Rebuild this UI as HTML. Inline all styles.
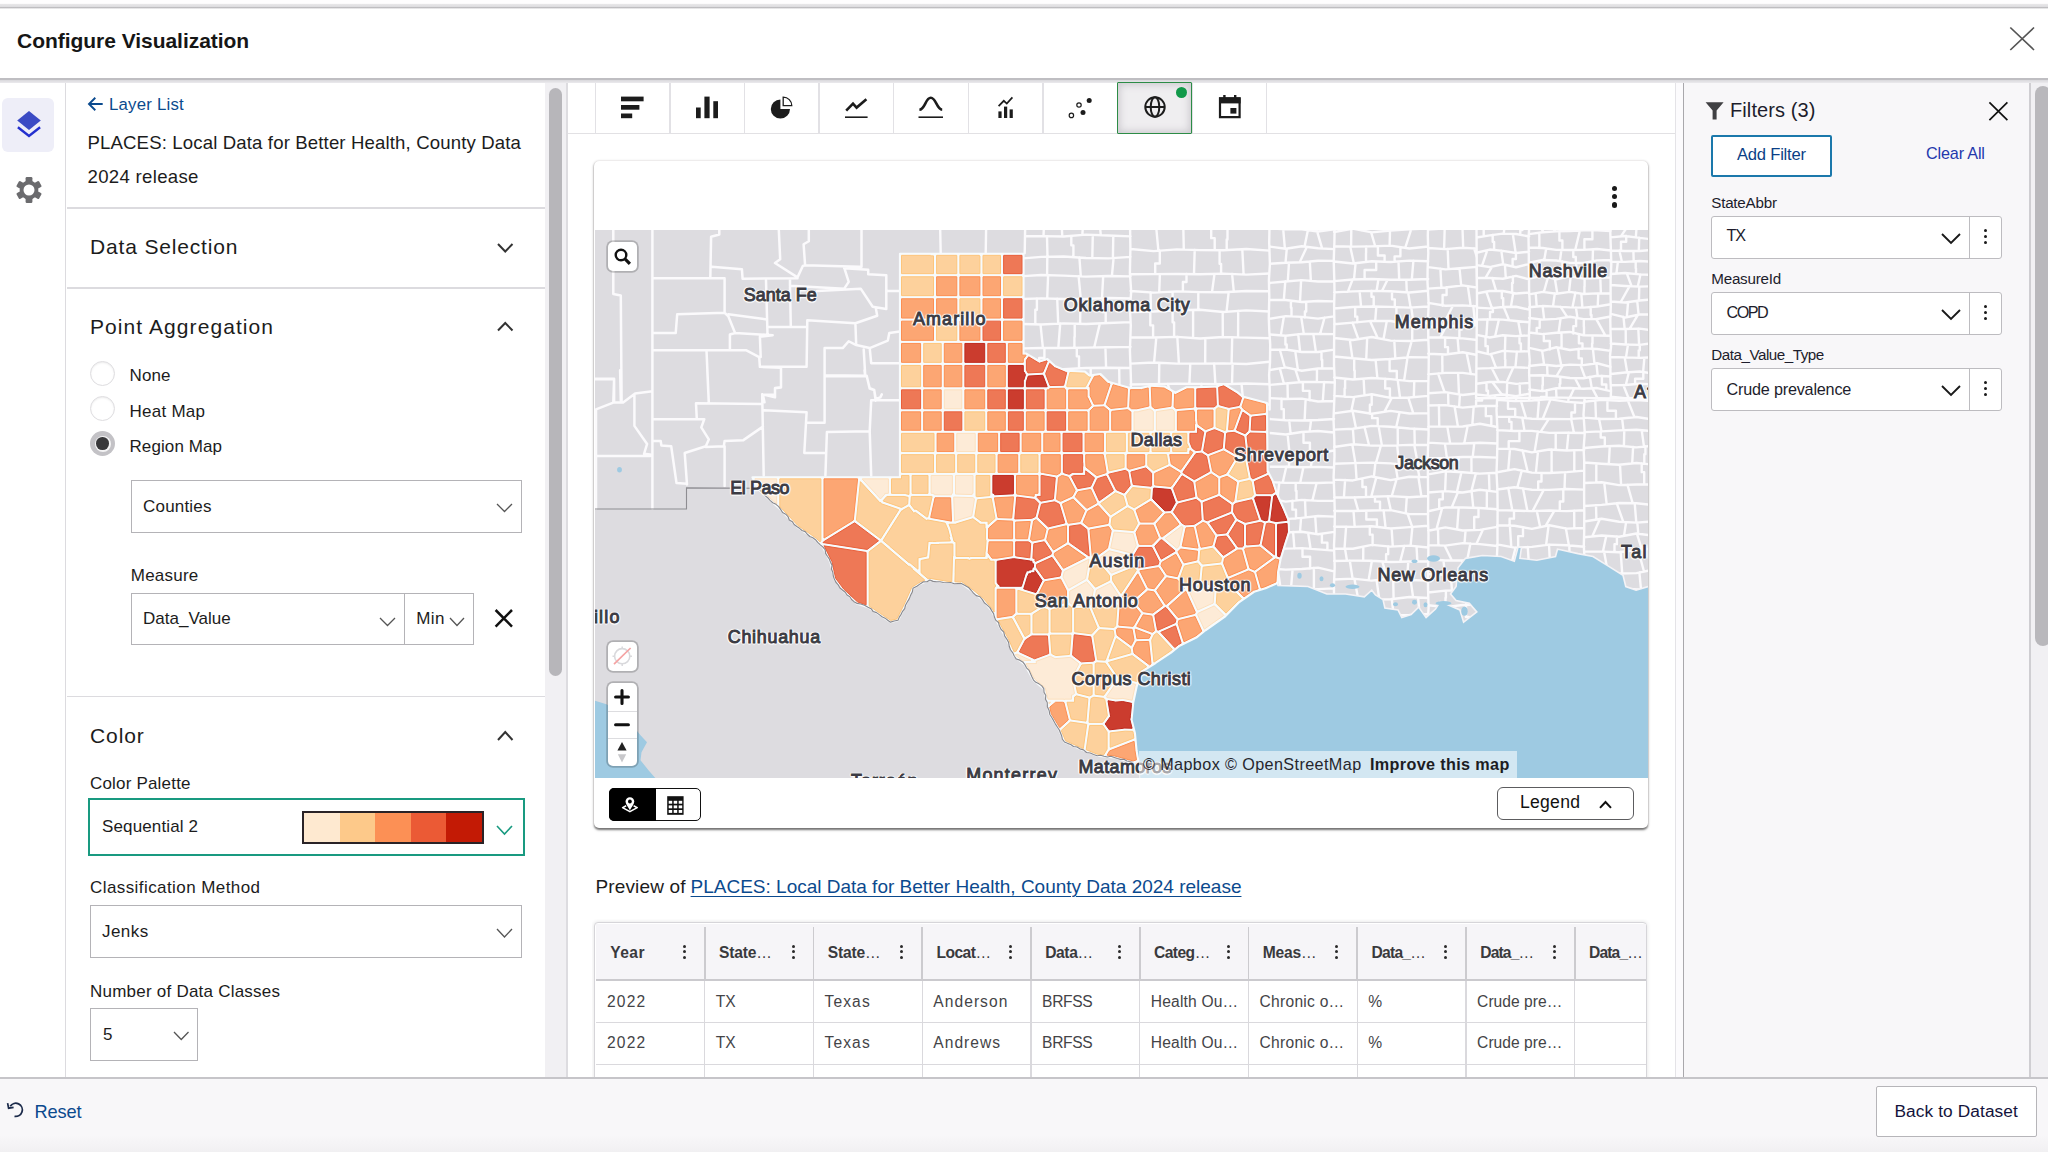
<!DOCTYPE html>
<html lang="en"><head><meta charset="utf-8"><title>Configure Visualization</title>
<style>
html,body{margin:0;padding:0;}
body{width:2048px;height:1152px;overflow:hidden;background:#fff;font-family:"Liberation Sans",sans-serif;color:#212121;}
#app{position:relative;width:2048px;height:1152px;overflow:hidden;}
.t{position:absolute;white-space:nowrap;line-height:1;}
</style></head>
<body><div id="app">
<div style="position:absolute;left:0.00px;top:0.00px;width:2048.00px;height:9.00px;background:linear-gradient(#fefdfe 0,#fefdfe 38%,#e8e7e9 44%,#dfdee1 72%,#bebdc0 80%,#bfbec1 88%,#f0eff1 96%,#fdfcfd 100%);"></div>
<div style="position:absolute;left:0.00px;top:9.00px;width:2048.00px;height:68.50px;background:#fff;"></div>
<div style="position:absolute;left:0.00px;top:77.50px;width:2048.00px;height:2.00px;background:#bfbec2;"></div>
<div style="position:absolute;left:0.00px;top:79.50px;width:2048.00px;height:3.50px;background:linear-gradient(#d9d8dc,#ebeaed);"></div>
<div class="t" style="left:17.00px;top:30.00px;font-size:21px;font-weight:700;letter-spacing:-0.035px;color:#161616;">Configure Visualization</div>
<svg style="position:absolute;left:2008.00px;top:25.00px;" width="28" height="28" viewBox="0 0 28 28"><path d="M2.3 2.5L26 25M26 2.5L2.3 25" stroke="#555" stroke-width="1.7" fill="none"/></svg>
<div style="position:absolute;left:0.00px;top:83.00px;width:65.00px;height:995.00px;background:#fff;"></div>
<div style="position:absolute;left:65.00px;top:83.00px;width:1.40px;height:995.00px;background:#dcdbdf;"></div>
<div style="position:absolute;left:1.50px;top:98.00px;width:52.50px;height:53.50px;background:#eeeef8;border-radius:6px;"></div>
<svg style="position:absolute;left:14.60px;top:108.00px;" width="28" height="32" viewBox="0 0 28 32"><path d="M14 3.1L25.8 12.6L14 22.1L2.2 12.6Z" fill="#3b4bc4"/><path d="M2.9 19.3L14 28L25.1 19.3" fill="none" stroke="#2430cf" stroke-width="2.4"/></svg>
<svg style="position:absolute;left:15.50px;top:177.00px;" width="26" height="26" viewBox="0 0 26 26"><g transform="translate(13 13)" fill="#6b6b6e"><rect x="-3.4" y="-13" width="6.8" height="8" rx="1.2" transform="rotate(0)"/><rect x="-3.4" y="-13" width="6.8" height="8" rx="1.2" transform="rotate(60)"/><rect x="-3.4" y="-13" width="6.8" height="8" rx="1.2" transform="rotate(120)"/><rect x="-3.4" y="-13" width="6.8" height="8" rx="1.2" transform="rotate(180)"/><rect x="-3.4" y="-13" width="6.8" height="8" rx="1.2" transform="rotate(240)"/><rect x="-3.4" y="-13" width="6.8" height="8" rx="1.2" transform="rotate(300)"/><circle r="9.4"/><circle r="5.5" fill="#fff"/></g></svg>
<div style="position:absolute;left:66.50px;top:83.00px;width:478.50px;height:995.00px;background:#fff;"></div>
<div style="position:absolute;left:545.00px;top:83.00px;width:22.50px;height:995.00px;background:#f1f0f3;"></div>
<div style="position:absolute;left:549.00px;top:87.50px;width:13.00px;height:588.50px;background:#b7b6ba;border-radius:7px;"></div>
<div style="position:absolute;left:566.00px;top:83.00px;width:1.50px;height:995.00px;background:#dddce0;"></div>
<svg style="position:absolute;left:87.00px;top:96.00px;" width="18" height="16" viewBox="0 0 18 16"><path d="M15.7 8H2.2M8.3 1.8L2 8L8.3 14.2" fill="none" stroke="#0b4a8e" stroke-width="1.9"/></svg>
<div class="t" style="left:109.00px;top:97.10px;font-size:16.8px;letter-spacing:0.213px;color:#0b4a8e;">Layer List</div>
<div class="t" style="left:87.50px;top:134.20px;font-size:18.6px;letter-spacing:0.136px;color:#1c1c1c;">PLACES: Local Data for Better Health, County Data</div>
<div class="t" style="left:87.50px;top:168.20px;font-size:18.6px;letter-spacing:0.313px;color:#1c1c1c;">2024 release</div>
<div style="position:absolute;left:66.50px;top:207.00px;width:478.50px;height:1.50px;background:#dcdbdf;"></div>
<div style="position:absolute;left:66.50px;top:287.00px;width:478.50px;height:1.50px;background:#dcdbdf;"></div>
<div style="position:absolute;left:66.50px;top:695.50px;width:478.50px;height:1.50px;background:#dcdbdf;"></div>
<div class="t" style="left:90.00px;top:236.00px;font-size:21px;letter-spacing:0.840px;color:#1c1c1c;">Data Selection</div>
<svg style="position:absolute;left:496.00px;top:241.80px;" width="18.5" height="11.5" viewBox="0 0 18.5 11.5"><polyline points="2,2 9.25,9.5 16.5,2" fill="none" stroke="#333" stroke-width="2.0"/></svg>
<div class="t" style="left:90.00px;top:316.00px;font-size:21px;letter-spacing:1.075px;color:#1c1c1c;">Point Aggregation</div>
<svg style="position:absolute;left:496.00px;top:321.00px;" width="18.5" height="11.5" viewBox="0 0 18.5 11.5"><polyline points="2,9.5 9.25,2 16.5,9.5" fill="none" stroke="#333" stroke-width="2.0"/></svg>
<div style="position:absolute;left:90.00px;top:360.50px;width:25.00px;height:25.00px;border-radius:50%;background:#fff;border:1.5px solid #dedde0;box-sizing:border-box;box-shadow:inset 0 1px 2px rgba(0,0,0,.08);"></div>
<div style="position:absolute;left:90.00px;top:395.50px;width:25.00px;height:25.00px;border-radius:50%;background:#fff;border:1.5px solid #dedde0;box-sizing:border-box;box-shadow:inset 0 1px 2px rgba(0,0,0,.08);"></div>
<div style="position:absolute;left:90.00px;top:431.00px;width:25.00px;height:25.00px;border-radius:50%;background:#c3c2c6;"></div>
<div style="position:absolute;left:94.50px;top:435.50px;width:16.00px;height:16.00px;border-radius:50%;background:#f4f4f5;"></div>
<div style="position:absolute;left:96.20px;top:437.20px;width:12.60px;height:12.60px;border-radius:50%;background:#38383a;"></div>
<div class="t" style="left:129.50px;top:367.00px;font-size:17px;letter-spacing:0.119px;color:#1c1c1c;">None</div>
<div class="t" style="left:129.50px;top:403.00px;font-size:17px;letter-spacing:0.257px;color:#1c1c1c;">Heat Map</div>
<div class="t" style="left:129.50px;top:438.00px;font-size:17px;letter-spacing:0.092px;color:#1c1c1c;">Region Map</div>
<div style="position:absolute;left:130.50px;top:480.00px;width:391.00px;height:52.50px;background:#fff;border:1px solid #b4b3b7;box-sizing:border-box;"></div>
<div class="t" style="left:143.00px;top:498.00px;font-size:17px;letter-spacing:0.200px;color:#1c1c1c;">Counties</div>
<svg style="position:absolute;left:495.00px;top:502.40px;" width="19" height="11.5" viewBox="0 0 19 11.5"><polyline points="2,2 9.5,9.5 17,2" fill="none" stroke="#555" stroke-width="1.3"/></svg>
<div class="t" style="left:130.75px;top:567.00px;font-size:17px;letter-spacing:0.226px;color:#1c1c1c;">Measure</div>
<div style="position:absolute;left:130.50px;top:592.50px;width:274.00px;height:52.50px;background:#fff;border:1px solid #b4b3b7;box-sizing:border-box;"></div>
<div style="position:absolute;left:403.50px;top:592.50px;width:70.50px;height:52.50px;background:#fff;border:1px solid #b4b3b7;box-sizing:border-box;"></div>
<div class="t" style="left:143.00px;top:610.00px;font-size:17px;letter-spacing:0.018px;color:#1c1c1c;">Data_Value</div>
<svg style="position:absolute;left:378.00px;top:615.80px;" width="19" height="11.5" viewBox="0 0 19 11.5"><polyline points="2,2 9.5,9.5 17,2" fill="none" stroke="#555" stroke-width="1.3"/></svg>
<div class="t" style="left:416.25px;top:610.00px;font-size:17px;letter-spacing:0.428px;color:#1c1c1c;">Min</div>
<svg style="position:absolute;left:448.00px;top:615.80px;" width="18" height="11.5" viewBox="0 0 18 11.5"><polyline points="2,2 9.0,9.5 16,2" fill="none" stroke="#555" stroke-width="1.3"/></svg>
<svg style="position:absolute;left:492.00px;top:606.00px;" width="24" height="24" viewBox="0 0 24 24"><path d="M3.6 4L20 20.6M20 4L3.6 20.6" stroke="#111" stroke-width="2.5" fill="none"/></svg>
<div class="t" style="left:90.00px;top:725.00px;font-size:21px;letter-spacing:0.891px;color:#1c1c1c;">Color</div>
<svg style="position:absolute;left:496.00px;top:730.00px;" width="18.5" height="12" viewBox="0 0 18.5 12"><polyline points="2,10 9.25,2 16.5,10" fill="none" stroke="#333" stroke-width="2.0"/></svg>
<div class="t" style="left:90.00px;top:775.00px;font-size:17px;letter-spacing:0.185px;color:#1c1c1c;">Color Palette</div>
<div style="position:absolute;left:87.50px;top:797.50px;width:437.00px;height:58.50px;background:#fff;border:2.5px solid #199a80;box-sizing:border-box;"></div>
<div class="t" style="left:102.00px;top:818.00px;font-size:17px;letter-spacing:0.134px;color:#1c1c1c;">Sequential 2</div>
<div style="position:absolute;left:302.00px;top:811.00px;width:181.50px;height:32.50px;border:2px solid #2a2327;box-sizing:border-box;display:flex;"><div style="flex:1;background:#fee9d0"></div><div style="flex:1;background:#fdc98a"></div><div style="flex:1;background:#fc9055"></div><div style="flex:1;background:#eb5a35"></div><div style="flex:1;background:#c31a05"></div></div>
<svg style="position:absolute;left:495.00px;top:823.50px;" width="19" height="12.0" viewBox="0 0 19 12.0"><polyline points="2,2 9.5,10.0 17,2" fill="none" stroke="#199a80" stroke-width="1.6"/></svg>
<div class="t" style="left:90.00px;top:879.00px;font-size:17px;letter-spacing:0.421px;color:#1c1c1c;">Classification Method</div>
<div style="position:absolute;left:90.00px;top:905.00px;width:431.50px;height:52.50px;background:#fff;border:1px solid #b4b3b7;box-sizing:border-box;"></div>
<div class="t" style="left:102.00px;top:923.00px;font-size:17px;letter-spacing:0.460px;color:#1c1c1c;">Jenks</div>
<svg style="position:absolute;left:495.00px;top:927.40px;" width="19" height="12.0" viewBox="0 0 19 12.0"><polyline points="2,2 9.5,10.0 17,2" fill="none" stroke="#555" stroke-width="1.3"/></svg>
<div class="t" style="left:90.00px;top:983.00px;font-size:17px;letter-spacing:0.229px;color:#1c1c1c;">Number of Data Classes</div>
<div style="position:absolute;left:90.00px;top:1008.00px;width:108.00px;height:52.50px;background:#fff;border:1px solid #b4b3b7;box-sizing:border-box;"></div>
<div class="t" style="left:103.00px;top:1026.00px;font-size:17px;color:#1c1c1c;">5</div>
<svg style="position:absolute;left:172.00px;top:1030.40px;" width="18.5" height="11.5" viewBox="0 0 18.5 11.5"><polyline points="2,2 9.25,9.5 16.5,2" fill="none" stroke="#555" stroke-width="1.3"/></svg>
<div style="position:absolute;left:567.50px;top:83.00px;width:1108.00px;height:995.00px;background:#fff;"></div>
<div style="position:absolute;left:567.50px;top:83.00px;width:1108.00px;height:50.50px;background:#fff;"></div>
<div style="position:absolute;left:567.50px;top:133.00px;width:1108.00px;height:1.30px;background:#e2e1e4;"></div>
<div style="position:absolute;left:594.65px;top:83.00px;width:1.30px;height:50.50px;background:#e2e1e5;"></div>
<div style="position:absolute;left:669.25px;top:83.00px;width:1.30px;height:50.50px;background:#e2e1e5;"></div>
<div style="position:absolute;left:743.85px;top:83.00px;width:1.30px;height:50.50px;background:#e2e1e5;"></div>
<div style="position:absolute;left:818.45px;top:83.00px;width:1.30px;height:50.50px;background:#e2e1e5;"></div>
<div style="position:absolute;left:893.05px;top:83.00px;width:1.30px;height:50.50px;background:#e2e1e5;"></div>
<div style="position:absolute;left:967.65px;top:83.00px;width:1.30px;height:50.50px;background:#e2e1e5;"></div>
<div style="position:absolute;left:1042.25px;top:83.00px;width:1.30px;height:50.50px;background:#e2e1e5;"></div>
<div style="position:absolute;left:1116.85px;top:83.00px;width:1.30px;height:50.50px;background:#e2e1e5;"></div>
<div style="position:absolute;left:1191.45px;top:83.00px;width:1.30px;height:50.50px;background:#e2e1e5;"></div>
<div style="position:absolute;left:1266.05px;top:83.00px;width:1.30px;height:50.50px;background:#e2e1e5;"></div>
<div style="position:absolute;left:1117.15px;top:82.00px;width:75.00px;height:52.00px;background:#efeef0;border:1.6px solid #2c8c46;box-sizing:border-box;box-shadow:inset 0 0 7px 2px rgba(120,110,125,.28);border-radius:1px;"></div>
<div style="position:absolute;left:1176.00px;top:87.00px;width:11.20px;height:11.20px;background:#12994a;border-radius:50%;"></div>
<svg style="position:absolute;left:620.00px;top:95.00px;" width="26" height="26" viewBox="0 0 26 26"><g fill="#1c1c1c"><rect x="1" y="1.6" width="22.6" height="4.7"/><rect x="1" y="10" width="18.4" height="4.7"/><rect x="1" y="18.5" width="11.2" height="4.7"/></g></svg>
<svg style="position:absolute;left:695.00px;top:95.00px;" width="26" height="26" viewBox="0 0 26 26"><g fill="#1c1c1c"><rect x="1" y="12.5" width="4.7" height="10.7"/><rect x="9.4" y="1.6" width="5.2" height="21.6"/><rect x="18.3" y="6.2" width="4.7" height="17"/></g></svg>
<svg style="position:absolute;left:768.00px;top:94.00px;" width="28" height="28" viewBox="0 0 28 28"><path d="M12.4 5.4A9.6 9.6 0 1 0 22 15H12.4Z" fill="#1c1c1c"/><path d="M15.2 3.1A8.6 8.6 0 0 1 23.8 11.7H15.2Z" fill="#fff" stroke="#1c1c1c" stroke-width="1.3"/></svg>
<svg style="position:absolute;left:843.00px;top:94.00px;" width="28" height="28" viewBox="0 0 28 28"><path d="M3.2 16.6L10 9.6L13.6 13.6L23.4 5.2" fill="none" stroke="#1c1c1c" stroke-width="2.6"/><path d="M2 23.2H24.6" stroke="#1c1c1c" stroke-width="1.6"/></svg>
<svg style="position:absolute;left:916.00px;top:94.00px;" width="30" height="28" viewBox="0 0 30 28"><path d="M3.4 15.8C9.2 15.4 9.4 3.8 14.8 3.8C20.2 3.8 20.6 15.4 26.2 15.8" fill="none" stroke="#1c1c1c" stroke-width="2.6"/><path d="M2.5 23.2H27" stroke="#1c1c1c" stroke-width="1.6"/></svg>
<svg style="position:absolute;left:996.00px;top:94.00px;" width="20" height="28" viewBox="0 0 20 28"><g fill="#1c1c1c"><rect x="2.4" y="17.4" width="3.2" height="6.6"/><rect x="8" y="12.6" width="3.2" height="11.4"/><rect x="13.6" y="15.4" width="3.2" height="8.6"/></g><path d="M2.6 12.2L7.8 6.8L10.8 9.6L16.4 3.4" fill="none" stroke="#1c1c1c" stroke-width="1.7"/></svg>
<svg style="position:absolute;left:1066.00px;top:94.00px;" width="28" height="28" viewBox="0 0 28 28"><circle cx="23.2" cy="6.6" r="2.5" fill="#1c1c1c"/><circle cx="17" cy="18.4" r="2.5" fill="#1c1c1c"/><circle cx="13" cy="11" r="2.2" fill="#fff" stroke="#1c1c1c" stroke-width="1.2"/><circle cx="5.4" cy="21.4" r="2.2" fill="#fff" stroke="#1c1c1c" stroke-width="1.2"/></svg>
<svg style="position:absolute;left:1142.00px;top:94.00px;" width="26" height="26" viewBox="0 0 26 26"><g fill="none" stroke="#1c1c1c" stroke-width="2"><circle cx="13" cy="13" r="9.7"/><ellipse cx="13" cy="13" rx="4.3" ry="9.7"/><path d="M3.3 13H22.7"/></g></svg>
<svg style="position:absolute;left:1217.00px;top:93.00px;" width="26" height="28" viewBox="0 0 26 28"><path d="M3 5.4H22.6V24.2H3Z" fill="none" stroke="#1c1c1c" stroke-width="2.2"/><rect x="2" y="4.4" width="21.6" height="6" fill="#1c1c1c"/><rect x="6.2" y="2" width="2.4" height="4" fill="#1c1c1c"/><rect x="17" y="2" width="2.4" height="4" fill="#1c1c1c"/><rect x="13.4" y="15" width="6" height="5.6" fill="#1c1c1c"/></svg>
<div style="position:absolute;left:594.00px;top:160.50px;width:1053.50px;height:667.00px;background:#fff;border-radius:5px;box-shadow:0 1.6px 2.2px rgba(0,0,0,.55),0 0 3px rgba(60,0,20,.10);"></div>
<div style="position:absolute;left:1611.95px;top:186.25px;width:5.10px;height:5.10px;border-radius:50%;background:#1a1a1a;"></div><div style="position:absolute;left:1611.95px;top:194.35px;width:5.10px;height:5.10px;border-radius:50%;background:#1a1a1a;"></div><div style="position:absolute;left:1611.95px;top:202.45px;width:5.10px;height:5.10px;border-radius:50%;background:#1a1a1a;"></div>
<svg style="position:absolute;left:594.5px;top:229.75px;" width="1053.0" height="548.25" viewBox="594.5 229.75 1053.0 548.25"><rect x="594.5" y="229.75" width="1053.0" height="548.25" fill="#dddce0"/>
<polygon points="1277.0,582.7 1277.5,585.3 1292.0,585.6 1307.5,586.3 1326.3,593.8 1345.0,593.8 1363.8,596.6 1371.3,590.0 1375.0,594.7 1382.5,599.4 1384.4,607.8 1397.5,609.7 1401.3,617.2 1410.6,614.4 1418.1,606.9 1425.6,617.2 1435.0,608.8 1439.7,601.3 1459.4,609.7 1463.1,621.9 1476.3,611.6 1468.8,603.1 1455.6,600.3 1450.0,593.8 1455.6,586.3 1457.5,567.5 1465.0,558.1 1481.9,555.3 1500.6,556.3 1513.8,560.9 1517.5,547.0 1521.0,547.0 1519.4,558.1 1536.3,560.0 1555.0,556.3 1557.0,549.0 1560.0,549.5 1577.5,553.4 1592.5,556.3 1607.5,565.6 1622.5,575.0 1625.3,586.3 1635.6,590.0 1647.5,586.3 1647.5,778.0 1140.0,778.0 1137.8,760.6 1136.0,750.3 1134.4,733.0 1131.0,719.4 1132.7,702.2 1136.0,686.7 1141.3,671.3 1155.0,662.7 1170.5,652.3 1179.0,645.5 1196.3,636.9 1204.9,630.0 1212.0,625.0 1224.0,616.6 1238.7,601.8 1253.5,591.5 1265.0,588.0" fill="#9ecae2"/>
<polygon points="594.5,700.6 606.0,704.0 619.5,712.4 631.0,724.0 640.0,735.0 646.5,742.0 641.0,752.0 640.0,760.0 648.0,770.0 655.0,778.0 594.5,778.0" fill="#9ecae2"/>
<clipPath id="cpok"><path d="M899.4 420.0L899.5 420.0L899.5 254.0L899.4 254.0ZM1023.0 353.4L1025.8 353.4L1039.0 361.3L1046.9 358.9L1054.7 366.0L1065.6 370.6L1084.4 371.4L1089.0 375.3L1100.0 373.8L1107.8 381.6L1118.8 384.7L1129.7 387.8L1140.6 387.8L1150.0 385.5L1164.0 386.3L1175.0 392.5L1186.0 387.0L1196.9 387.0L1215.6 386.3L1223.4 383.9L1237.5 392.5L1242.2 396.4L1266.4 402.7L1266.6 420.0L1269.0 420.0L1269.0 229.8L1024.5 229.8L1024.5 254.0L1023.0 254.0Z"/></clipPath><clipPath id="cpeast"><path d="M1269.0 474.4L1271.9 480.0L1276.6 494.0L1283.0 508.0L1288.0 520.0L1288.5 532.0L1284.5 544.3L1280.0 559.0L1277.5 572.0L1277.0 582.7L1277.5 585.3L1292.0 585.6L1307.5 586.3L1326.3 593.8L1345.0 593.8L1363.8 596.6L1371.3 590.0L1375.0 594.7L1382.5 599.4L1384.4 607.8L1397.5 609.7L1401.3 617.2L1410.6 614.4L1418.1 606.9L1425.6 617.2L1435.0 608.8L1439.7 601.3L1459.4 609.7L1463.1 621.9L1476.3 611.6L1468.8 603.1L1455.6 600.3L1450.0 593.8L1455.6 586.3L1457.5 567.5L1465.0 558.1L1481.9 555.3L1500.6 556.3L1513.8 560.9L1517.5 547.0L1521.0 547.0L1519.4 558.1L1536.3 560.0L1555.0 556.3L1557.0 549.0L1560.0 549.5L1577.5 553.4L1592.5 556.3L1607.5 565.6L1622.5 575.0L1625.3 586.3L1635.6 590.0L1647.5 586.3L1647.5 398.0L1476.0 398.0L1476.0 229.8L1269.0 229.8Z"/></clipPath><clipPath id="cpne"><path d="M1647.5 229.8L1476.0 229.8L1476.0 398.0L1647.5 398.0Z"/></clipPath><path clip-path="url(#cpok)" d="M899.4 210.8L923.3 211.7L947.1 211.1L971.0 211.9L994.8 212.0L1018.7 210.5M899.4 236.0L923.3 236.2L947.1 237.9L971.0 237.5L994.8 235.9L1018.7 237.6M899.4 262.2L923.3 263.4L947.1 262.2L971.0 261.8L994.8 264.1L1018.7 262.4M899.4 286.9L923.3 288.9L947.1 288.6L971.0 287.0L994.8 288.8L1018.7 287.7M899.4 314.2L923.3 313.0L947.1 314.9L971.0 314.2L994.8 315.0L1018.7 314.8M899.4 331.1L923.3 331.3L947.1 330.8L971.0 330.7L994.8 330.5L1018.7 331.1M899.4 353.9L923.3 352.3L947.1 354.0L971.0 353.2L994.8 353.1L1018.7 354.4M899.4 379.9L923.3 379.5L947.1 379.9L971.0 380.5L994.8 378.8L1018.7 381.2M899.4 402.3L923.3 404.2L947.1 404.5L971.0 402.3L994.8 404.3L1018.7 403.2M899.4 429.7L923.3 428.2L947.1 428.3L971.0 428.7L994.8 430.7L1018.7 428.7M927.1 211.6L927.1 236.5M952.3 211.3L950.0 237.8M981.4 211.9L984.5 236.6M928.0 236.5L929.9 263.1M949.4 237.8L949.1 262.1M983.4 236.7L983.0 263.0M916.8 263.1L917.6 288.4M935.3 262.8L932.4 288.7M953.5 262.1L954.2 288.1M970.8 261.8L969.8 287.1M997.1 263.9L996.6 288.7M925.1 288.8L925.1 300.5L929.5 300.5L929.5 313.1M959.0 287.8L959.0 300.3L961.5 300.3L961.5 314.6M989.8 288.4L991.3 314.9M925.3 313.1L926.4 331.2M956.4 314.6L955.0 330.8M980.8 314.5L982.6 330.6M927.2 331.2L927.7 352.6M957.3 330.8L955.7 353.7M986.4 330.6L986.3 353.1M1005.3 330.8L1005.6 353.7M924.1 352.4L926.1 379.5M949.5 354.0L950.0 380.0M964.9 353.4L964.9 367.6L967.2 367.6L967.2 380.3M983.1 353.1L983.1 368.6L973.9 368.6L973.9 380.3M919.1 379.5L919.1 392.6L918.9 392.6L918.9 404.0M943.8 379.8L943.5 404.4M969.9 380.4L968.5 402.5M995.4 378.8L995.4 391.1L993.8 391.1L993.8 404.2M919.4 403.9L919.4 414.7L915.9 414.7L915.9 428.4M952.0 404.0L951.1 428.4M976.9 402.8L978.7 429.4M1018.7 222.8L1019.0 244.0L1019.2 264.0L1018.8 281.1L1018.4 305.7L1018.0 324.0L1018.4 351.2L1018.2 378.3L1018.9 393.6L1018.3 421.1L1018.2 436.6M1018.7 216.6L1040.9 216.7L1063.2 216.7L1085.5 214.4L1107.8 214.7L1130.1 215.1M1018.7 236.1L1040.9 235.9L1063.2 236.2L1085.5 234.4L1107.8 235.2L1130.1 236.1M1018.7 258.4L1040.9 256.6L1063.2 256.3L1085.5 257.7L1107.8 258.1L1130.1 256.6M1018.7 276.1L1040.9 274.8L1063.2 275.4L1085.5 276.4L1107.8 275.8L1130.1 276.1M1018.7 298.9L1040.9 298.1L1063.2 298.7L1085.5 298.6L1107.8 297.7L1130.1 298.2M1018.7 323.7L1040.9 324.2L1063.2 323.1L1085.5 323.8L1107.8 322.7L1130.1 321.9M1018.7 348.2L1040.9 347.7L1063.2 347.8L1085.5 347.4L1107.8 347.0L1130.1 346.6M1018.7 368.2L1040.9 368.7L1063.2 369.0L1085.5 367.8L1107.8 367.5L1130.1 367.8M1018.7 388.7L1040.9 390.5L1063.2 389.3L1085.5 388.8L1107.8 388.8L1130.1 391.1M1018.7 416.3L1040.9 416.5L1063.2 415.6L1085.5 416.5L1107.8 416.7L1130.1 415.7M1018.7 438.2L1040.9 439.4L1063.2 440.0L1085.5 438.1L1107.8 440.2L1130.1 440.4M1043.8 216.7L1043.0 235.9M1060.7 216.7L1061.8 236.2M1083.3 214.7L1081.8 234.7M1098.3 214.6L1100.3 234.9M1046.5 236.0L1047.0 256.6M1070.8 235.6L1070.8 245.1L1072.9 245.1L1072.9 256.7M1092.3 234.6L1091.8 257.8M1112.8 235.4L1112.4 257.8M1046.8 256.6L1046.6 274.9M1078.9 257.3L1080.3 276.1M1113.1 257.7L1111.4 275.9M1047.6 275.0L1046.7 298.3M1078.1 276.0L1080.3 298.6M1102.7 275.9L1101.5 297.9M1036.4 298.3L1036.4 309.5L1034.8 309.5L1034.8 324.2M1056.7 298.5L1057.7 323.4M1080.0 298.6L1079.6 323.6M1102.3 297.9L1102.3 311.9L1105.2 311.9L1105.2 323.0M1040.0 324.2L1042.4 347.7M1059.7 323.3L1057.8 347.8M1074.2 323.4L1074.2 336.7L1073.9 336.7L1073.9 347.6M1099.4 323.1L1093.7 347.2M1043.9 347.7L1043.9 357.7L1038.7 357.7L1038.7 368.8M1076.3 347.6L1076.3 356.1L1078.5 356.1L1078.5 368.2M1104.9 347.0L1105.6 367.6M1033.3 368.6L1033.3 389.9M1060.4 368.9L1062.3 389.4M1090.2 367.8L1090.2 379.6L1089.2 379.6L1089.2 388.8M1118.7 367.7L1119.0 389.9M1034.0 390.0L1034.0 405.2L1032.8 405.2L1032.8 416.5M1053.5 389.8L1053.1 416.0M1077.5 389.0L1077.5 403.6L1078.6 403.6L1078.6 416.1M1110.4 389.0L1108.9 416.6M1035.9 416.5L1035.0 439.1M1066.0 415.7L1066.5 439.7M1089.3 416.5L1090.8 438.6M1129.5 222.8L1129.9 247.7L1129.4 272.7L1130.7 291.4L1129.4 308.2L1130.3 325.1L1129.4 350.2L1130.0 365.9L1130.5 382.3L1129.8 404.6L1129.6 423.6M1130.1 225.8L1153.2 227.1L1176.4 226.0L1199.5 226.2L1222.7 226.6L1245.8 226.1L1269.0 227.3M1130.1 248.8L1153.2 250.9L1176.4 249.1L1199.5 249.9L1222.7 250.0L1245.8 248.7L1269.0 250.4M1130.1 274.0L1153.2 273.9L1176.4 273.7L1199.5 274.0L1222.7 273.4L1245.8 274.4L1269.0 273.3M1130.1 290.8L1153.2 292.4L1176.4 291.1L1199.5 291.9L1222.7 292.0L1245.8 290.7L1269.0 291.0M1130.1 311.7L1153.2 311.2L1176.4 310.0L1199.5 309.5L1222.7 311.8L1245.8 310.1L1269.0 311.3M1130.1 337.0L1153.2 337.3L1176.4 336.6L1199.5 338.2L1222.7 336.8L1245.8 337.4L1269.0 338.0M1130.1 363.4L1153.2 362.3L1176.4 363.4L1199.5 363.4L1222.7 363.1L1245.8 363.7L1269.0 361.5M1130.1 384.3L1153.2 383.9L1176.4 383.4L1199.5 383.6L1222.7 384.0L1245.8 383.2L1269.0 384.0M1130.1 405.0L1153.2 403.7L1176.4 405.4L1199.5 405.1L1222.7 405.0L1245.8 404.2L1269.0 404.2M1130.1 430.8L1153.2 429.7L1176.4 430.0L1199.5 431.2L1222.7 429.7L1245.8 431.0L1269.0 431.0M1155.7 227.0L1157.9 250.5M1182.8 226.1L1183.3 249.3M1210.7 226.4L1210.7 237.9L1214.2 237.9L1214.2 250.0M1227.0 226.6L1227.0 239.3L1226.2 239.3L1226.2 249.9M1159.3 250.4L1159.3 263.2L1154.7 263.2L1154.7 273.9M1194.2 249.7L1193.5 273.9M1219.1 250.0L1219.1 263.6L1220.6 263.6L1220.6 273.5M1241.8 249.0L1243.1 274.3M1159.4 273.9L1158.7 292.1M1186.0 273.8L1186.0 281.8L1182.4 281.8L1182.4 291.4M1214.0 273.6L1211.5 292.0M1231.6 273.8L1233.3 291.4M1150.1 292.2L1150.4 311.3M1172.1 291.4L1172.1 299.2L1174.0 299.2L1174.0 310.2M1197.8 291.9L1197.8 309.5M1228.2 291.7L1226.0 311.6M1149.8 311.3L1149.8 325.1L1152.6 325.1L1152.6 337.2M1172.1 310.2L1172.1 322.1L1173.6 322.1L1173.6 336.7M1192.6 309.6L1192.6 337.7M1222.2 311.8L1222.3 336.9M1237.7 310.7L1237.6 337.2M1155.8 337.2L1153.6 362.3M1176.8 336.6L1178.4 363.4M1204.8 337.9L1204.7 363.4M1231.7 337.1L1231.1 363.3M1158.8 362.6L1158.5 383.8M1189.8 363.4L1188.9 383.5M1213.6 363.2L1214.9 383.9M1232.1 363.3L1231.5 383.7M1151.3 383.9L1148.4 404.0M1167.2 383.6L1174.1 405.2M1200.9 383.6L1200.9 395.6L1193.2 395.6L1193.2 405.1M1226.8 383.9L1225.6 404.9M1241.0 383.4L1243.0 404.3M1155.1 403.9L1154.9 429.7M1184.9 405.3L1184.9 430.4M1201.6 405.1L1199.4 431.2M1221.5 405.0L1218.9 429.9M1239.0 404.5L1231.5 430.2" fill="none" stroke="#fbfafc" stroke-width="2.4" stroke-linejoin="round" stroke-linecap="round"/><path clip-path="url(#cpeast)" d="M1269.0 213.9L1285.2 215.6L1301.3 214.9L1317.5 216.8L1333.6 214.1M1269.0 228.1L1285.2 229.0L1301.3 229.1L1317.5 231.2L1333.6 229.1M1269.0 246.3L1285.2 248.5L1301.3 246.0L1317.5 248.0L1333.6 248.9M1269.0 263.5L1285.2 262.5L1301.3 262.0L1317.5 260.5L1333.6 260.6M1269.0 282.7L1285.2 281.2L1301.3 279.9L1317.5 281.3L1333.6 281.3M1269.0 299.8L1285.2 299.8L1301.3 301.8L1317.5 300.7L1333.6 301.1M1269.0 318.5L1285.2 315.9L1301.3 316.6L1317.5 318.4L1333.6 316.1M1269.0 334.2L1285.2 335.5L1301.3 333.6L1317.5 333.7L1333.6 333.9M1269.0 349.5L1285.2 349.2L1301.3 351.7L1317.5 351.7L1333.6 349.4M1269.0 369.8L1285.2 367.1L1301.3 370.5L1317.5 368.2L1333.6 368.1M1269.0 384.7L1285.2 383.2L1301.3 381.7L1317.5 381.6L1333.6 382.2M1269.0 397.8L1285.2 398.8L1301.3 398.4L1317.5 401.2L1333.6 400.8M1269.0 418.8L1285.2 420.0L1301.3 420.2L1317.5 419.8L1333.6 418.8M1269.0 432.7L1285.2 434.2L1301.3 431.8L1317.5 430.7L1333.6 432.2M1269.0 453.1L1285.2 452.8L1301.3 453.0L1317.5 452.9L1333.6 450.2M1269.0 466.5L1285.2 466.5L1301.3 467.0L1317.5 466.6L1333.6 467.2M1269.0 481.9L1285.2 482.6L1301.3 482.6L1317.5 482.7L1333.6 482.1M1269.0 498.5L1285.2 501.4L1301.3 499.6L1317.5 500.6L1333.6 500.6M1269.0 518.3L1285.2 518.9L1301.3 517.6L1317.5 515.8L1333.6 516.4M1269.0 531.5L1285.2 532.1L1301.3 531.5L1317.5 534.0L1333.6 531.6M1269.0 549.1L1285.2 548.4L1301.3 547.9L1317.5 549.1L1333.6 550.4M1269.0 568.1L1285.2 569.4L1301.3 568.7L1317.5 567.4L1333.6 571.1M1269.0 590.0L1285.2 589.1L1301.3 589.5L1317.5 588.9L1333.6 588.1M1269.0 609.2L1285.2 606.0L1301.3 607.4L1317.5 609.3L1333.6 606.7M1269.0 621.3L1285.2 623.1L1301.3 623.7L1317.5 623.4L1333.6 625.4M1269.0 636.9L1285.2 637.0L1301.3 636.7L1317.5 638.4L1333.6 637.0M1269.0 654.2L1285.2 655.5L1301.3 653.7L1317.5 654.7L1333.6 656.5M1269.0 671.2L1285.2 671.1L1301.3 672.1L1317.5 669.3L1333.6 672.5M1269.0 692.6L1285.2 690.0L1301.3 689.9L1317.5 693.4L1333.6 690.8M1269.0 710.8L1285.2 708.3L1301.3 710.9L1317.5 709.9L1333.6 708.2M1269.0 726.1L1285.2 728.0L1301.3 725.1L1317.5 728.4L1333.6 728.5M1269.0 746.3L1285.2 746.2L1301.3 746.4L1317.5 749.3L1333.6 746.8M1269.0 766.2L1285.2 766.3L1301.3 766.1L1317.5 766.4L1333.6 769.2M1269.0 785.1L1285.2 782.7L1301.3 782.9L1317.5 781.2L1333.6 782.8M1269.0 799.1L1285.2 797.4L1301.3 797.9L1317.5 798.0L1333.6 796.4M1281.0 215.1L1281.0 222.0L1273.4 222.0L1273.4 228.5M1309.1 215.8L1308.5 230.0M1282.7 228.9L1284.4 248.4M1307.4 229.9L1304.0 246.4M1316.6 231.1L1321.7 248.3M1286.3 248.4L1285.0 262.5M1306.3 246.7L1299.2 262.0M1288.5 262.4L1287.3 281.0M1309.3 261.2L1310.4 280.7M1284.8 281.2L1283.3 299.8M1300.6 280.0L1299.5 301.6M1290.4 300.4L1290.4 307.5L1291.0 307.5L1291.0 316.1M1305.7 301.5L1305.7 311.2L1304.4 311.2L1304.4 317.3M1283.4 316.2L1280.3 335.1M1300.7 316.6L1303.3 333.6M1324.0 317.5L1319.6 333.8M1284.9 335.5L1284.9 344.3L1286.2 344.3L1286.2 349.2M1297.7 334.0L1299.6 351.4M1312.8 333.7L1315.4 351.7M1279.3 349.3L1284.3 367.2M1294.7 350.7L1297.4 369.7M1321.0 351.2L1321.0 359.4L1321.7 359.4L1321.7 368.2M1279.3 368.1L1283.4 383.4M1294.9 369.1L1298.9 381.9M1316.5 368.4L1316.4 381.6M1287.0 383.0L1287.3 398.7M1302.4 381.7L1302.4 390.6L1309.1 390.6L1309.1 400.0M1323.6 381.8L1322.3 401.0M1281.0 398.5L1281.0 408.9L1283.3 408.9L1283.3 419.7M1305.1 399.1L1304.1 420.1M1288.7 420.0L1290.1 433.4M1310.6 420.0L1309.1 431.3M1287.1 433.9L1289.0 452.8M1303.0 431.7L1303.0 442.5L1309.4 442.5L1309.4 453.0M1289.6 452.8L1288.3 466.6M1312.6 453.0L1310.3 466.8M1285.8 466.5L1282.2 482.5M1302.9 466.9L1299.7 482.6M1278.8 482.3L1276.7 499.9M1295.2 482.6L1295.2 490.6L1296.0 490.6L1296.0 499.9M1316.1 482.7L1311.9 500.2M1291.9 500.7L1291.9 509.4L1295.5 509.4L1295.5 518.3M1304.5 499.8L1305.2 517.2M1287.7 518.7L1287.7 524.9L1286.7 524.9L1286.7 532.1M1300.6 517.7L1299.5 531.5M1314.7 516.2L1315.9 533.8M1292.6 531.8L1293.9 548.2M1307.6 532.5L1310.1 548.6M1321.4 533.4L1321.4 542.4L1326.9 542.4L1326.9 549.6M1278.5 548.7L1276.9 568.8M1302.0 548.0L1302.0 556.5L1309.6 556.5L1309.6 568.2M1277.2 568.8L1280.3 589.4M1292.1 569.1L1290.4 589.2M1313.4 567.7L1313.4 589.1M1283.9 589.2L1291.8 606.6M1310.1 589.2L1310.1 608.5M1281.8 606.6L1281.7 622.7M1294.5 606.8L1297.5 623.6M1315.1 609.1L1316.2 623.5M1290.4 623.3L1288.0 636.9M1310.7 623.5L1310.0 637.6M1283.3 637.0L1278.2 654.9M1297.5 636.8L1298.5 654.0M1315.1 638.1L1315.1 646.8L1303.5 646.8L1303.5 654.0M1288.6 655.1L1289.3 671.4M1303.1 653.8L1303.5 671.7M1320.0 655.0L1324.1 670.7M1279.2 671.1L1283.2 690.3M1297.9 671.9L1294.6 690.0M1307.3 671.1L1310.7 691.9M1284.0 690.2L1294.1 709.7M1302.4 690.2L1302.1 710.8M1323.1 692.5L1316.4 709.9M1281.1 708.9L1281.1 719.6L1273.5 719.6L1273.5 727.0M1303.1 710.8L1303.3 725.5M1323.7 709.2L1326.3 728.5M1288.4 727.4L1288.0 746.3M1297.3 725.8L1304.4 747.0M1325.5 728.5L1325.5 738.6L1325.1 738.6L1325.1 748.3M1288.7 746.3L1288.7 757.1L1281.2 757.1L1281.2 766.3M1308.7 747.8L1308.7 756.0L1311.6 756.0L1311.6 766.3M1288.6 766.2L1297.2 782.9M1304.6 766.2L1304.9 782.6M1291.9 782.8L1288.7 797.5M1309.0 782.1L1307.2 797.9M1334.2 222.8L1333.9 241.9L1333.2 261.0L1333.8 279.1L1334.0 291.6L1333.6 305.9L1333.9 323.1L1333.6 342.8L1333.5 364.3L1334.3 382.0L1333.9 397.2L1333.0 418.8L1333.8 438.6L1334.0 456.1L1333.1 476.7L1333.8 493.6L1334.3 512.6L1334.1 532.7L1333.5 545.3L1334.2 566.5L1333.4 586.1L1333.7 605.8L1333.8 624.6L1333.9 645.3L1333.6 667.1L1333.8 684.0L1333.0 701.6L1333.4 723.3L1333.0 740.3L1334.2 754.2L1333.3 768.9L1333.3 789.1M1333.6 213.6L1352.4 213.9L1371.3 210.3L1390.1 211.7L1408.9 212.4L1427.7 214.3M1333.6 231.7L1352.4 228.4L1371.3 232.1L1390.1 230.2L1408.9 229.1L1427.7 228.1M1333.6 246.0L1352.4 246.4L1371.3 246.1L1390.1 245.4L1408.9 248.2L1427.7 246.2M1333.6 261.3L1352.4 263.3L1371.3 261.0L1390.1 261.8L1408.9 260.4L1427.7 261.0M1333.6 280.9L1352.4 279.2L1371.3 278.8L1390.1 279.5L1408.9 279.5L1427.7 278.8M1333.6 292.1L1352.4 291.1L1371.3 290.6L1390.1 291.0L1408.9 292.2L1427.7 290.5M1333.6 308.2L1352.4 306.8L1371.3 306.3L1390.1 306.6L1408.9 307.4L1427.7 306.2M1333.6 324.0L1352.4 322.4L1371.3 320.6L1390.1 320.7L1408.9 324.2L1427.7 322.8M1333.6 337.8L1352.4 339.7L1371.3 336.7L1390.1 340.4L1408.9 340.7L1427.7 339.5M1333.6 356.3L1352.4 358.0L1371.3 359.8L1390.1 358.7L1408.9 357.0L1427.7 357.1M1333.6 377.2L1352.4 379.2L1371.3 377.7L1390.1 378.9L1408.9 380.9L1427.7 380.9M1333.6 395.6L1352.4 396.9L1371.3 394.0L1390.1 397.6L1408.9 397.3L1427.7 395.6M1333.6 413.1L1352.4 410.5L1371.3 413.5L1390.1 410.6L1408.9 413.3L1427.7 412.9M1333.6 429.4L1352.4 428.5L1371.3 425.6L1390.1 426.5L1408.9 428.2L1427.7 429.3M1333.6 446.8L1352.4 444.0L1371.3 445.4L1390.1 445.4L1408.9 444.6L1427.7 444.8M1333.6 463.5L1352.4 462.9L1371.3 462.4L1390.1 463.1L1408.9 465.4L1427.7 463.9M1333.6 479.4L1352.4 480.2L1371.3 476.2L1390.1 479.9L1408.9 476.5L1427.7 476.9M1333.6 497.1L1352.4 497.2L1371.3 496.5L1390.1 495.9L1408.9 497.0L1427.7 495.7M1333.6 510.6L1352.4 510.7L1371.3 510.2L1390.1 509.9L1408.9 513.9L1427.7 513.9M1333.6 526.3L1352.4 526.6L1371.3 526.0L1390.1 528.2L1408.9 526.9L1427.7 525.5M1333.6 548.3L1352.4 548.5L1371.3 544.6L1390.1 546.4L1408.9 545.4L1427.7 547.2M1333.6 560.7L1352.4 560.4L1371.3 560.5L1390.1 561.8L1408.9 561.3L1427.7 561.3M1333.6 579.3L1352.4 578.4L1371.3 580.4L1390.1 578.2L1408.9 579.8L1427.7 580.4M1333.6 598.6L1352.4 598.4L1371.3 599.3L1390.1 599.0L1408.9 596.7L1427.7 597.7M1333.6 614.4L1352.4 613.8L1371.3 616.8L1390.1 615.2L1408.9 614.8L1427.7 613.8M1333.6 634.2L1352.4 637.0L1371.3 635.6L1390.1 636.0L1408.9 637.0L1427.7 638.0M1333.6 653.4L1352.4 651.3L1371.3 654.7L1390.1 651.1L1408.9 652.9L1427.7 653.1M1333.6 672.4L1352.4 675.1L1371.3 673.9L1390.1 674.3L1408.9 671.8L1427.7 674.8M1333.6 686.7L1352.4 688.1L1371.3 688.7L1390.1 686.8L1408.9 686.6L1427.7 686.9M1333.6 710.2L1352.4 708.8L1371.3 708.0L1390.1 708.4L1408.9 708.8L1427.7 707.1M1333.6 723.3L1352.4 723.4L1371.3 725.5L1390.1 725.6L1408.9 727.3L1427.7 725.7M1333.6 740.7L1352.4 741.3L1371.3 739.1L1390.1 738.8L1408.9 739.0L1427.7 738.6M1333.6 756.1L1352.4 755.3L1371.3 753.3L1390.1 757.0L1408.9 755.1L1427.7 756.0M1333.6 776.3L1352.4 776.5L1371.3 776.5L1390.1 774.4L1408.9 774.5L1427.7 777.1M1333.6 794.6L1352.4 793.7L1371.3 796.7L1390.1 796.4L1408.9 796.5L1427.7 794.8M1346.5 213.8L1343.4 230.0M1358.1 212.8L1361.5 230.2M1384.7 211.3L1387.6 230.4M1401.0 212.1L1402.9 229.4M1350.8 228.7L1350.6 246.3M1370.6 231.9L1374.7 246.0M1389.5 230.2L1389.1 245.5M1410.7 229.0L1404.7 247.6M1349.7 246.3L1353.4 263.2M1365.6 246.2L1365.6 252.8L1365.5 252.8L1365.5 261.3M1377.4 245.9L1377.4 255.2L1384.1 255.2L1384.1 261.4M1399.9 246.9L1399.9 256.1L1394.1 256.1L1394.1 261.2M1355.1 263.0L1353.5 279.2M1375.7 261.2L1375.7 269.8L1364.1 269.8L1364.1 278.9M1398.0 261.2L1398.7 279.5M1412.9 260.5L1411.3 279.4M1352.1 279.3L1347.4 291.4M1377.9 279.0L1376.1 290.7M1387.0 279.4L1381.5 290.8M1405.8 279.5L1406.3 292.1M1359.1 290.9L1360.6 306.6M1371.0 290.6L1371.0 296.5L1373.2 296.5L1373.2 306.3M1391.5 291.1L1391.5 299.1L1394.3 299.1L1394.3 306.8M1407.6 292.1L1410.1 307.4M1354.7 306.7L1354.7 316.4L1356.8 316.4L1356.8 322.3M1375.8 306.4L1374.7 320.6M1395.9 306.9L1395.9 321.8M1410.8 307.3L1413.1 323.9M1352.1 322.5L1357.9 338.8M1369.5 320.8L1377.3 337.9M1386.3 320.7L1383.0 339.0M1411.8 324.0L1411.7 340.5M1349.3 339.4L1351.9 357.9M1366.7 337.4L1365.7 359.2M1393.8 340.5L1394.8 358.3M1411.3 340.5L1406.7 357.2M1353.7 358.1L1353.7 370.3L1354.2 370.3L1354.2 379.1M1375.1 359.6L1376.9 378.1M1389.1 358.8L1389.1 370.8L1396.3 370.8L1396.3 379.2M1407.0 357.2L1403.6 380.3M1344.6 378.4L1344.6 388.2L1344.1 388.2L1344.1 396.5M1363.1 378.4L1364.0 395.1M1384.7 378.5L1384.7 388.2L1389.4 388.2L1389.4 397.5M1397.2 379.6L1399.5 397.4M1413.8 380.9L1413.3 396.9M1353.7 396.7L1350.8 410.7M1371.2 394.0L1371.2 404.5L1369.4 404.5L1369.4 413.5M1391.2 397.6L1383.9 411.6M1407.8 397.3L1412.8 413.2M1352.0 410.6L1355.5 428.0M1371.6 413.5L1371.6 417.9L1377.2 417.9L1377.2 425.7M1399.1 411.9L1395.7 427.0M1352.4 428.5L1353.5 444.1M1364.0 426.7L1368.6 445.2M1378.1 425.9L1381.4 445.4M1397.2 427.2L1397.3 445.1M1413.9 428.5L1414.3 444.7M1351.8 444.1L1354.9 462.9M1380.4 445.4L1375.5 462.6M1396.7 445.1L1398.5 464.1M1413.7 444.6L1417.6 464.7M1355.0 462.8L1356.1 479.4M1374.9 462.6L1373.4 476.6M1394.8 463.7L1397.2 478.6M1416.6 464.8L1418.9 476.7M1344.6 479.8L1343.4 497.1M1361.9 478.2L1361.9 486.7L1365.5 486.7L1365.5 496.7M1375.8 477.1L1370.7 496.6M1396.1 478.8L1391.2 496.0M1417.9 476.7L1420.9 496.2M1354.0 497.1L1357.8 510.6M1374.5 496.4L1374.5 501.4L1379.5 501.4L1379.5 510.1M1387.2 496.0L1390.3 510.0M1406.3 496.9L1405.2 513.1M1353.0 510.7L1354.2 526.5M1365.8 510.4L1365.8 519.3L1376.4 519.3L1376.4 526.3M1383.1 510.0L1385.1 527.6M1407.1 513.5L1411.7 526.7M1345.6 526.5L1344.0 548.4M1369.3 526.0L1369.3 534.4L1372.1 534.4L1372.1 545.0M1391.1 528.1L1392.3 546.3M1411.9 526.7L1410.1 545.5M1344.5 548.4L1346.5 560.5M1362.8 546.4L1362.7 560.5M1387.7 546.2L1387.7 553.9L1385.6 553.9L1385.6 561.6M1403.7 545.7L1399.6 561.6M1416.0 546.1L1416.9 561.3M1349.3 560.5L1352.1 578.4M1371.4 560.5L1368.1 580.1M1381.8 561.2L1386.8 578.6M1407.8 561.4L1406.4 579.6M1353.9 578.5L1357.7 598.7M1376.1 579.9L1378.8 599.2M1392.7 578.4L1393.1 598.6M1410.1 579.8L1412.6 596.9M1343.9 598.5L1348.9 613.9M1354.4 598.5L1357.9 614.7M1370.2 599.2L1373.8 616.5M1391.3 598.8L1393.2 615.1M1417.6 597.1L1419.1 614.3M1352.8 613.9L1348.2 636.4M1370.2 616.6L1371.1 635.6M1384.9 615.6L1385.1 635.9M1411.5 614.7L1404.6 636.8M1350.9 636.8L1351.8 651.3M1377.9 635.8L1377.4 653.5M1394.8 636.2L1398.2 651.9M1416.2 637.4L1414.3 652.9M1346.3 652.0L1346.3 664.4L1348.6 664.4L1348.6 674.6M1368.2 654.1L1370.6 673.9M1389.9 651.2L1391.4 674.1M1404.3 652.4L1403.5 672.5M1350.8 674.9L1350.8 683.1L1345.9 683.1L1345.9 687.9M1370.8 673.9L1368.8 688.6M1394.7 673.7L1394.7 681.9L1390.5 681.9L1390.5 686.8M1414.5 672.7L1411.1 686.6M1349.1 687.9L1349.1 698.5L1342.3 698.5L1342.3 709.3M1367.2 688.6L1366.6 708.2M1390.8 686.8L1391.9 708.4M1408.7 686.6L1409.9 708.7M1356.4 708.6L1354.0 723.6M1375.7 708.1L1374.5 725.5M1390.7 708.4L1393.2 725.9M1412.1 708.5L1412.1 717.7L1421.5 717.7L1421.5 726.3M1345.9 723.4L1346.6 741.1M1358.5 724.1L1360.9 740.3M1378.6 725.5L1381.2 738.9M1398.3 726.3L1401.2 738.9M1410.2 727.2L1410.2 732.1L1410.2 732.1L1410.2 738.9M1353.6 741.1L1349.5 755.4M1369.1 739.4L1367.4 753.7M1381.7 738.9L1381.7 746.8L1387.9 746.8L1387.9 756.0M1402.6 738.9L1401.0 755.9M1354.7 755.0L1357.7 776.5M1364.1 754.1L1364.1 763.6L1372.5 763.6L1372.5 776.5M1378.2 754.6L1371.6 776.4M1397.2 756.2L1396.3 774.5M1417.8 755.5L1406.4 774.5M1356.9 776.5L1356.9 786.9L1349.6 786.9L1349.6 793.7M1377.7 775.8L1378.1 796.6M1398.4 774.5L1397.7 796.4M1427.7 222.8L1427.3 235.1L1427.8 253.1L1427.1 269.0L1427.0 282.1L1428.2 303.7L1427.6 316.4L1427.8 337.9L1428.3 350.9L1428.2 367.0L1427.8 386.5L1427.8 398.9L1428.0 416.0L1428.1 434.8L1427.3 453.7L1427.4 474.3L1427.7 496.3L1427.5 518.0L1428.0 534.7L1427.8 556.6L1427.4 572.8L1427.5 587.0L1428.1 607.5L1427.1 622.0L1428.0 634.0L1427.7 649.6L1427.3 663.0L1427.5 682.0L1428.1 695.5L1428.3 710.3L1427.2 730.4L1428.4 744.1L1427.6 759.0L1427.7 780.2L1427.2 796.6M1427.7 212.4L1444.9 209.8L1462.2 211.7L1479.4 210.2L1496.6 212.5M1427.7 229.3L1444.9 228.1L1462.2 228.3L1479.4 226.0L1496.6 226.5M1427.7 247.7L1444.9 248.9L1462.2 247.5L1479.4 248.5L1496.6 246.8M1427.7 266.9L1444.9 269.1L1462.2 267.8L1479.4 266.4L1496.6 267.5M1427.7 288.4L1444.9 287.2L1462.2 285.1L1479.4 287.7L1496.6 287.6M1427.7 302.6L1444.9 305.5L1462.2 305.1L1479.4 306.3L1496.6 305.9M1427.7 326.3L1444.9 326.8L1462.2 324.6L1479.4 325.3L1496.6 326.2M1427.7 337.2L1444.9 337.2L1462.2 338.1L1479.4 340.0L1496.6 336.9M1427.7 353.5L1444.9 354.3L1462.2 352.0L1479.4 355.2L1496.6 355.4M1427.7 374.1L1444.9 372.6L1462.2 372.6L1479.4 374.9L1496.6 372.1M1427.7 393.0L1444.9 391.9L1462.2 394.8L1479.4 392.8L1496.6 391.9M1427.7 405.2L1444.9 404.9L1462.2 407.4L1479.4 405.8L1496.6 405.7M1427.7 426.4L1444.9 426.4L1462.2 426.3L1479.4 423.5L1496.6 426.8M1427.7 442.4L1444.9 443.4L1462.2 443.2L1479.4 442.5L1496.6 443.2M1427.7 457.9L1444.9 457.8L1462.2 456.8L1479.4 456.8L1496.6 457.4M1427.7 474.1L1444.9 471.1L1462.2 472.0L1479.4 473.4L1496.6 472.5M1427.7 492.2L1444.9 490.9L1462.2 492.3L1479.4 489.5L1496.6 491.6M1427.7 511.0L1444.9 507.2L1462.2 507.3L1479.4 507.7L1496.6 509.0M1427.7 530.5L1444.9 527.1L1462.2 530.3L1479.4 529.6L1496.6 526.6M1427.7 544.9L1444.9 545.4L1462.2 542.9L1479.4 543.9L1496.6 545.8M1427.7 559.0L1444.9 560.3L1462.2 560.2L1479.4 558.2L1496.6 556.9M1427.7 573.7L1444.9 574.6L1462.2 573.9L1479.4 573.1L1496.6 574.4M1427.7 592.3L1444.9 590.4L1462.2 590.1L1479.4 591.7L1496.6 588.4M1427.7 605.0L1444.9 606.9L1462.2 604.7L1479.4 604.4L1496.6 604.3M1427.7 628.6L1444.9 626.6L1462.2 628.2L1479.4 628.4L1496.6 629.1M1427.7 642.9L1444.9 642.1L1462.2 644.1L1479.4 641.0L1496.6 645.1M1427.7 662.7L1444.9 661.4L1462.2 659.1L1479.4 662.6L1496.6 660.7M1427.7 679.4L1444.9 677.1L1462.2 678.2L1479.4 676.0L1496.6 679.4M1427.7 693.8L1444.9 694.4L1462.2 694.2L1479.4 693.7L1496.6 693.5M1427.7 713.9L1444.9 715.9L1462.2 712.6L1479.4 712.4L1496.6 715.9M1427.7 731.6L1444.9 731.8L1462.2 732.5L1479.4 732.4L1496.6 729.0M1427.7 748.5L1444.9 747.1L1462.2 750.5L1479.4 750.0L1496.6 750.0M1427.7 770.3L1444.9 768.3L1462.2 768.9L1479.4 770.5L1496.6 767.8M1427.7 788.3L1444.9 790.9L1462.2 790.3L1479.4 790.4L1496.6 790.8M1450.4 210.4L1449.5 228.1M1469.4 211.1L1472.7 226.9M1444.2 228.1L1443.6 248.8M1462.0 228.3L1462.7 247.6M1483.1 226.1L1484.5 248.0M1447.2 248.7L1448.0 268.9M1473.6 248.2L1479.5 266.4M1439.9 268.5L1440.9 287.5M1459.0 268.1L1460.7 285.3M1476.2 266.7L1476.7 287.3M1446.1 287.0L1446.1 294.7L1442.1 294.7L1442.1 305.5M1467.3 285.9L1470.2 305.6M1486.7 287.7L1486.0 306.2M1452.5 305.3L1441.6 326.7M1472.8 305.8L1474.8 325.1M1445.2 326.8L1439.8 337.2M1461.1 324.7L1461.1 329.4L1458.9 329.4L1458.9 337.8M1482.2 325.5L1481.8 339.6M1444.6 337.2L1444.6 346.9L1447.5 346.9L1447.5 353.7M1457.1 337.9L1458.3 352.5M1481.6 339.6L1482.7 355.2M1441.8 354.2L1441.8 364.6L1441.9 364.6L1441.9 372.6M1466.1 352.7L1470.4 373.7M1483.6 355.2L1479.7 374.8M1437.6 373.3L1444.1 392.0M1457.6 372.6L1458.5 394.2M1476.5 374.5L1477.4 393.1M1447.6 392.4L1447.9 405.3M1459.4 394.3L1458.6 406.9M1481.6 392.7L1481.6 400.3L1475.6 400.3L1475.6 406.1M1438.4 405.0L1438.8 426.4M1454.1 406.2L1457.4 426.3M1473.2 406.4L1471.8 424.7M1485.3 405.7L1485.3 415.9L1490.8 415.9L1490.8 425.9M1446.8 426.4L1449.7 443.4M1467.2 425.5L1463.7 443.2M1444.4 443.4L1446.4 457.7M1473.8 442.7L1472.2 456.8M1443.0 457.8L1445.2 471.1M1458.8 457.0L1454.2 471.6M1470.9 456.8L1471.0 472.7M1445.4 471.1L1444.6 490.9M1460.9 471.9L1456.4 491.8M1475.4 473.1L1470.9 490.9M1488.4 472.9L1489.0 490.7M1442.3 491.1L1442.3 499.1L1438.7 499.1L1438.7 508.6M1457.5 491.9L1451.2 507.3M1471.1 490.8L1472.8 507.6M1486.4 490.3L1486.3 508.2M1441.6 508.0L1436.0 528.9M1458.2 507.3L1456.6 529.2M1478.0 507.7L1478.0 516.7L1473.7 516.7L1473.7 529.7M1437.5 528.6L1437.9 545.2M1465.1 530.2L1464.0 543.0M1482.6 529.0L1475.9 543.7M1444.2 545.4L1451.4 560.3M1469.9 543.3L1466.7 559.7M1442.9 560.1L1444.7 574.6M1461.5 560.2L1464.3 573.8M1479.2 558.3L1474.1 573.3M1450.2 574.4L1451.5 590.3M1475.3 573.3L1473.9 591.2M1445.4 590.4L1445.4 597.4L1445.0 597.4L1445.0 606.8M1461.8 590.1L1461.8 598.0L1465.7 598.0L1465.7 604.7M1489.0 589.9L1481.5 604.4M1450.6 606.2L1450.6 616.1L1459.9 616.1L1459.9 627.7M1465.5 604.6L1465.5 616.8L1468.4 616.8L1468.4 628.3M1477.8 604.4L1479.2 628.4M1445.7 626.7L1449.0 642.5M1464.8 628.3L1462.4 644.0M1483.8 628.6L1485.6 642.5M1446.8 642.3L1446.8 653.5L1447.1 653.5L1447.1 660.8M1471.8 642.4L1472.6 661.2M1483.5 642.0L1477.3 662.2M1450.1 660.7L1450.1 669.1L1451.2 669.1L1451.2 677.3M1463.1 659.2L1459.1 678.0M1485.6 661.9L1482.0 676.5M1447.9 677.3L1447.9 686.1L1443.3 686.1L1443.3 694.4M1465.4 677.8L1467.0 694.1M1482.8 676.7L1478.7 693.7M1435.4 694.0L1438.6 715.2M1464.2 694.1L1464.2 701.8L1461.8 701.8L1461.8 712.6M1476.1 693.8L1476.1 703.8L1481.2 703.8L1481.2 713.0M1450.6 714.8L1450.6 723.4L1449.0 723.4L1449.0 731.9M1468.7 712.5L1468.7 721.4L1468.0 721.4L1468.0 732.5M1445.0 731.8L1442.7 747.3M1463.9 732.5L1460.9 750.3M1480.0 732.3L1483.7 750.0M1442.3 747.3L1442.3 758.0L1445.5 758.0L1445.5 768.7M1454.5 749.0L1459.3 768.8M1474.3 750.1L1474.3 759.1L1471.5 759.1L1471.5 769.8M1440.2 768.9L1440.2 780.9L1437.6 780.9L1437.6 789.9M1465.4 769.2L1464.9 790.3M1484.4 769.7L1476.2 790.4M1496.3 222.8L1497.1 235.2L1497.1 248.0L1497.3 268.0L1497.1 281.0L1496.1 293.8L1496.1 314.3L1497.3 333.7L1496.5 350.5L1496.8 371.6L1496.9 393.5L1496.0 410.0L1497.0 431.0L1496.9 444.3L1496.5 458.9L1496.0 472.5L1496.9 489.1L1497.1 508.3L1497.0 529.5L1497.0 543.9L1496.1 563.3L1497.2 575.4L1497.1 589.0L1496.5 610.6L1496.0 627.9L1497.1 640.5L1496.3 658.8L1496.0 672.7L1496.3 692.4L1497.1 704.8L1496.2 719.9L1496.4 737.6L1496.6 754.9L1496.3 772.3L1497.3 789.3L1496.5 803.3M1496.6 221.3L1514.0 222.3L1531.4 221.9L1548.8 220.1L1566.2 220.9L1583.7 223.1M1496.6 238.9L1514.0 240.4L1531.4 238.7L1548.8 238.6L1566.2 242.6L1583.7 240.2M1496.6 261.1L1514.0 259.3L1531.4 259.7L1548.8 261.3L1566.2 263.1L1583.7 263.1M1496.6 275.8L1514.0 276.3L1531.4 275.0L1548.8 277.7L1566.2 274.7L1583.7 275.4M1496.6 292.1L1514.0 294.5L1531.4 295.1L1548.8 293.2L1566.2 292.7L1583.7 295.3M1496.6 312.8L1514.0 315.7L1531.4 313.8L1548.8 316.4L1566.2 313.5L1583.7 316.2M1496.6 330.1L1514.0 327.7L1531.4 327.2L1548.8 329.1L1566.2 326.6L1583.7 328.9M1496.6 346.7L1514.0 348.3L1531.4 345.8L1548.8 348.4L1566.2 346.5L1583.7 347.9M1496.6 365.1L1514.0 362.7L1531.4 363.4L1548.8 365.1L1566.2 365.0L1583.7 365.9M1496.6 379.7L1514.0 381.3L1531.4 381.1L1548.8 383.5L1566.2 381.8L1583.7 381.0M1496.6 399.5L1514.0 400.8L1531.4 400.3L1548.8 398.9L1566.2 401.6L1583.7 402.7M1496.6 416.4L1514.0 416.6L1531.4 418.5L1548.8 418.8L1566.2 418.9L1583.7 417.9M1496.6 429.9L1514.0 430.7L1531.4 430.6L1548.8 432.6L1566.2 432.5L1583.7 432.7M1496.6 448.4L1514.0 448.7L1531.4 452.1L1548.8 449.2L1566.2 450.3L1583.7 449.6M1496.6 472.0L1514.0 468.9L1531.4 472.4L1548.8 472.8L1566.2 471.9L1583.7 470.4M1496.6 489.2L1514.0 487.0L1531.4 489.5L1548.8 489.6L1566.2 488.7L1583.7 489.4M1496.6 509.9L1514.0 510.3L1531.4 510.9L1548.8 510.2L1566.2 510.9L1583.7 510.0M1496.6 525.0L1514.0 525.5L1531.4 528.6L1548.8 525.0L1566.2 528.4L1583.7 527.7M1496.6 544.1L1514.0 547.4L1531.4 546.6L1548.8 544.4L1566.2 545.0L1583.7 546.5M1496.6 565.0L1514.0 564.8L1531.4 566.0L1548.8 563.7L1566.2 566.0L1583.7 566.5M1496.6 585.6L1514.0 583.7L1531.4 582.9L1548.8 584.0L1566.2 583.6L1583.7 584.7M1496.6 600.9L1514.0 601.8L1531.4 600.9L1548.8 601.0L1566.2 601.9L1583.7 602.9M1496.6 622.9L1514.0 621.1L1531.4 623.4L1548.8 621.6L1566.2 623.7L1583.7 620.9M1496.6 640.0L1514.0 639.3L1531.4 642.1L1548.8 641.2L1566.2 642.8L1583.7 640.8M1496.6 657.8L1514.0 655.1L1531.4 658.5L1548.8 654.7L1566.2 655.2L1583.7 658.7M1496.6 675.1L1514.0 679.0L1531.4 679.2L1548.8 675.1L1566.2 676.6L1583.7 678.3M1496.6 697.4L1514.0 695.6L1531.4 697.2L1548.8 695.0L1566.2 696.5L1583.7 693.5M1496.6 713.7L1514.0 711.7L1531.4 714.0L1548.8 712.0L1566.2 710.9L1583.7 712.8M1496.6 730.4L1514.0 731.6L1531.4 729.4L1548.8 731.2L1566.2 730.3L1583.7 730.9M1496.6 748.5L1514.0 749.1L1531.4 747.9L1548.8 747.7L1566.2 747.1L1583.7 748.5M1496.6 764.8L1514.0 762.5L1531.4 762.1L1548.8 764.6L1566.2 762.7L1583.7 764.8M1496.6 784.6L1514.0 782.5L1531.4 783.6L1548.8 786.2L1566.2 785.8L1583.7 785.0M1496.6 802.0L1514.0 802.0L1531.4 801.1L1548.8 801.5L1566.2 799.8L1583.7 801.5M1512.6 222.2L1512.8 240.3M1532.4 221.8L1532.4 232.0L1531.5 232.0L1531.5 239.0M1556.7 220.5L1554.0 239.8M1513.7 240.3L1515.4 259.4M1532.4 238.7L1532.4 248.7L1534.8 248.7L1534.8 260.3M1556.1 240.2L1556.1 251.7L1553.3 251.7L1553.3 261.9M1568.8 242.2L1571.5 263.1M1506.6 260.1L1508.4 276.2M1531.5 259.7L1531.5 269.3L1532.6 269.3L1532.6 275.2M1547.8 261.2L1545.9 277.3M1572.7 263.1L1571.5 274.9M1510.4 276.2L1512.3 294.3M1525.8 275.4L1526.3 294.9M1551.4 277.3L1551.4 283.8L1551.1 283.8L1551.1 293.2M1566.5 274.7L1569.5 293.2M1514.5 294.5L1510.9 315.2M1525.8 294.9L1527.4 314.2M1549.5 293.2L1548.0 316.2M1568.5 293.1L1568.5 304.9L1567.0 304.9L1567.0 313.7M1519.9 315.1L1515.3 327.7M1540.2 315.1L1546.5 328.8M1556.4 315.1L1557.7 327.8M1571.9 314.4L1574.3 327.7M1509.1 328.4L1517.0 347.8M1531.4 327.2L1531.1 345.8M1542.3 328.4L1539.5 347.0M1567.0 326.7L1565.0 346.6M1515.3 348.1L1515.3 353.8L1526.0 353.8L1526.0 363.0M1531.4 345.8L1540.6 364.3M1557.5 347.4L1557.5 354.7L1557.6 354.7L1557.6 365.0M1567.6 346.6L1566.8 365.0M1508.9 363.4L1510.6 381.0M1529.2 363.3L1526.0 381.2M1549.3 365.1L1549.3 375.1L1541.4 375.1L1541.4 382.5M1564.0 365.0L1562.0 382.2M1519.2 381.2L1515.2 400.8M1527.4 381.2L1528.8 400.4M1549.4 383.4L1549.1 399.0M1569.7 381.6L1567.7 401.7M1507.5 400.3L1507.5 408.6L1514.7 408.6L1514.7 416.6M1520.4 400.6L1525.6 417.9M1538.5 399.8L1537.0 418.6M1550.0 399.1L1542.2 418.7M1574.5 402.1L1574.5 412.2L1570.9 412.2L1570.9 418.5M1508.7 416.6L1508.7 421.6L1511.0 421.6L1511.0 430.4M1521.8 417.5L1524.0 430.6M1548.2 418.8L1540.1 431.6M1570.6 418.6L1573.4 432.6M1518.9 430.6L1518.9 440.9L1508.2 440.9L1508.2 448.6M1537.4 431.3L1534.1 451.6M1555.2 432.6L1555.2 449.6M1568.0 432.5L1566.3 450.3M1509.5 448.6L1507.7 470.0M1522.1 450.2L1527.2 471.5M1537.5 451.1L1535.4 472.5M1551.1 449.3L1551.1 472.7M1573.8 450.0L1573.8 471.3M1521.3 470.3L1516.8 487.4M1541.0 472.6L1541.0 481.3L1537.7 481.3L1537.7 489.6M1564.6 472.0L1564.0 488.8M1507.8 487.8L1511.8 510.2M1522.5 488.2L1526.9 510.7M1543.2 489.6L1532.1 510.8M1562.8 488.9L1562.8 501.3L1559.3 501.3L1559.3 510.7M1513.5 510.3L1513.5 518.4L1509.1 518.4L1509.1 525.4M1536.3 510.7L1539.7 526.9M1553.9 510.4L1545.0 525.8M1573.7 510.5L1573.8 528.1M1509.4 525.3L1510.8 546.8M1522.5 527.0L1522.5 535.9L1517.7 535.9L1517.7 547.2M1548.1 525.1L1545.6 544.9M1565.4 528.2L1568.4 545.2M1515.1 547.3L1510.6 564.9M1527.3 546.8L1528.5 565.8M1548.5 544.5L1549.5 563.8M1568.8 545.2L1569.3 566.1M1509.6 564.9L1510.3 584.1M1529.9 565.9L1531.1 582.9M1543.0 564.5L1538.3 583.3M1563.8 565.7L1563.7 583.6M1511.1 584.0L1511.1 592.0L1512.5 592.0L1512.5 601.7M1527.0 583.1L1524.8 601.2M1544.2 583.7L1544.2 593.1L1544.7 593.1L1544.7 601.0M1557.5 583.8L1558.3 601.5M1571.3 583.9L1571.6 602.2M1509.9 601.6L1506.2 621.9M1519.7 601.5L1513.8 621.1M1545.7 601.0L1544.9 622.0M1561.7 601.7L1556.9 622.6M1504.4 622.1L1504.4 630.6L1504.3 630.6L1504.3 639.7M1525.1 622.6L1515.3 639.5M1543.9 622.1L1548.8 641.2M1562.7 623.3L1562.7 632.8L1560.3 632.8L1560.3 642.3M1512.2 639.4L1509.0 655.9M1527.2 641.4L1528.7 658.0M1550.1 641.3L1551.7 654.8M1570.6 642.3L1571.1 656.2M1512.8 655.3L1512.8 667.3L1511.7 667.3L1511.7 678.3M1527.5 657.7L1530.7 679.1M1550.4 654.8L1550.6 675.2M1573.6 656.7L1573.5 677.3M1512.7 678.7L1515.5 695.7M1533.9 678.6L1538.4 696.3M1547.3 675.4L1543.3 695.7M1574.2 677.4L1571.4 695.6M1506.8 696.3L1506.0 712.6M1527.3 696.8L1519.4 712.4M1550.4 695.2L1548.2 712.1M1568.4 696.1L1579.3 712.3M1517.3 712.1L1520.0 730.8M1539.3 713.1L1539.3 720.2L1537.8 720.2L1537.8 729.6M1559.8 711.3L1567.4 730.4M1505.1 730.9L1509.5 748.9M1525.1 730.2L1525.1 740.8L1528.8 740.8L1528.8 748.3M1546.0 730.9L1544.7 747.7M1563.7 730.4L1558.5 747.3M1513.8 749.0L1519.7 762.4M1529.2 748.1L1528.8 762.1M1551.9 747.6L1551.9 756.8L1551.5 756.8L1551.5 764.4M1573.5 747.7L1573.5 754.4L1570.5 754.4L1570.5 763.0M1516.3 762.5L1517.0 782.7M1538.1 763.0L1538.1 774.5L1538.5 774.5L1538.5 784.7M1556.5 763.7L1561.1 785.9M1570.7 763.2L1573.2 785.5M1511.6 782.8L1510.3 802.0M1535.5 784.2L1535.5 792.1L1533.0 792.1L1533.0 801.1M1550.1 786.2L1548.2 801.4M1560.5 785.9L1560.5 792.4L1566.9 792.4L1566.9 800.1M1583.5 222.8L1584.3 241.8L1583.5 260.4L1583.8 281.8L1584.2 300.6L1583.1 313.1L1583.3 325.6L1584.0 347.5L1583.8 363.1L1583.6 379.4L1584.3 394.9L1583.0 414.4L1584.3 432.5L1583.1 448.3L1583.7 460.8L1583.7 476.5L1583.6 495.3L1583.8 513.4L1583.7 531.2L1583.3 545.2L1584.3 564.0L1583.0 577.0L1584.3 593.5L1583.3 614.3L1583.1 632.5L1583.1 652.6L1583.5 674.1L1583.4 689.2L1583.5 702.3L1583.0 716.3L1584.1 733.0L1583.7 752.6L1583.6 765.8L1583.6 780.3L1583.2 801.2M1583.7 219.3L1601.1 221.9L1618.6 221.9L1636.0 221.1L1653.5 221.0M1583.7 233.1L1601.1 232.6L1618.6 232.8L1636.0 234.5L1653.5 233.8M1583.7 257.5L1601.1 253.6L1618.6 255.9L1636.0 254.5L1653.5 253.9M1583.7 277.2L1601.1 277.2L1618.6 275.7L1636.0 275.7L1653.5 274.1M1583.7 291.8L1601.1 292.4L1618.6 293.0L1636.0 292.7L1653.5 292.7M1583.7 310.2L1601.1 313.4L1618.6 309.8L1636.0 310.4L1653.5 311.8M1583.7 329.8L1601.1 329.5L1618.6 329.4L1636.0 329.8L1653.5 328.4M1583.7 347.1L1601.1 348.1L1618.6 349.4L1636.0 350.0L1653.5 348.7M1583.7 365.5L1601.1 366.8L1618.6 365.8L1636.0 365.2L1653.5 364.9M1583.7 377.9L1601.1 379.1L1618.6 381.7L1636.0 379.7L1653.5 379.5M1583.7 401.5L1601.1 399.6L1618.6 400.5L1636.0 399.7L1653.5 400.9M1583.7 417.4L1601.1 418.7L1618.6 418.5L1636.0 416.8L1653.5 419.5M1583.7 431.9L1601.1 431.1L1618.6 430.1L1636.0 429.5L1653.5 431.0M1583.7 447.7L1601.1 446.2L1618.6 445.5L1636.0 447.1L1653.5 445.5M1583.7 462.3L1601.1 463.5L1618.6 464.5L1636.0 462.8L1653.5 464.4M1583.7 482.8L1601.1 482.0L1618.6 484.9L1636.0 484.2L1653.5 484.3M1583.7 505.7L1601.1 504.6L1618.6 502.7L1636.0 503.0L1653.5 504.8M1583.7 521.2L1601.1 518.5L1618.6 521.5L1636.0 522.4L1653.5 521.0M1583.7 537.0L1601.1 535.3L1618.6 536.5L1636.0 533.3L1653.5 535.5M1583.7 551.2L1601.1 551.4L1618.6 552.0L1636.0 549.7L1653.5 548.2M1583.7 572.4L1601.1 573.4L1618.6 573.2L1636.0 572.9L1653.5 569.2M1583.7 589.5L1601.1 590.6L1618.6 587.8L1636.0 589.2L1653.5 589.1M1583.7 603.1L1601.1 605.5L1618.6 601.8L1636.0 602.2L1653.5 604.7M1583.7 621.0L1601.1 619.7L1618.6 621.4L1636.0 618.5L1653.5 618.7M1583.7 635.5L1601.1 639.0L1618.6 636.6L1636.0 638.0L1653.5 637.4M1583.7 656.2L1601.1 655.0L1618.6 654.4L1636.0 657.4L1653.5 655.8M1583.7 673.2L1601.1 674.0L1618.6 671.9L1636.0 674.9L1653.5 673.2M1583.7 692.7L1601.1 692.4L1618.6 691.5L1636.0 694.5L1653.5 694.2M1583.7 712.0L1601.1 710.5L1618.6 712.3L1636.0 710.3L1653.5 710.8M1583.7 732.1L1601.1 729.9L1618.6 730.6L1636.0 730.1L1653.5 728.8M1583.7 751.7L1601.1 751.2L1618.6 750.9L1636.0 747.6L1653.5 751.5M1583.7 766.4L1601.1 769.9L1618.6 767.5L1636.0 765.9L1653.5 769.2M1583.7 780.6L1601.1 784.2L1618.6 781.1L1636.0 784.2L1653.5 780.7M1583.7 797.3L1601.1 799.8L1618.6 799.5L1636.0 800.0L1653.5 797.3M1602.8 221.9L1602.6 232.6M1623.9 221.7L1623.7 233.3M1637.4 221.1L1637.4 228.9L1644.3 228.9L1644.3 234.3M1593.9 232.8L1594.3 255.1M1610.3 232.7L1611.8 255.0M1632.3 234.1L1632.4 254.8M1594.6 255.0L1595.9 277.2M1607.3 254.4L1607.3 265.6L1601.9 265.6L1601.9 276.9M1630.4 254.9L1630.0 275.7M1598.3 277.2L1594.8 292.2M1612.2 276.3L1609.9 292.7M1628.6 275.7L1627.6 292.9M1645.1 274.9L1645.1 283.0L1640.6 283.0L1640.6 292.7M1600.9 292.4L1601.2 313.4M1625.9 292.9L1625.9 303.0L1624.0 303.0L1624.0 310.1M1635.3 292.8L1633.9 310.4M1602.8 313.1L1603.9 329.5M1623.9 310.0L1624.9 329.5M1593.9 329.6L1593.9 338.4L1598.4 338.4L1598.4 347.8M1611.3 329.4L1612.7 349.0M1627.6 329.6L1633.8 350.0M1644.1 329.2L1644.0 349.4M1596.1 347.8L1590.2 366.0M1611.0 348.9L1604.6 366.6M1626.8 349.7L1628.6 365.4M1604.2 366.6L1604.7 379.6M1628.8 365.4L1628.8 372.3L1627.9 372.3L1627.9 380.5M1604.1 379.5L1604.0 399.7M1626.3 380.8L1626.3 391.0L1626.3 391.0L1626.3 400.2M1594.8 400.3L1595.5 418.3M1606.9 399.9L1606.9 410.5L1615.4 410.5L1615.4 418.5M1627.3 400.1L1634.0 417.0M1598.5 418.5L1601.0 431.1M1621.6 418.2L1623.0 430.0M1600.2 431.2L1600.2 437.2L1604.3 437.2L1604.3 446.0M1623.8 429.9L1623.4 446.0M1641.2 429.9L1643.5 446.4M1609.3 445.9L1608.3 463.9M1632.6 446.8L1631.7 463.3M1644.9 446.3L1644.9 453.9L1643.8 453.9L1643.8 463.4M1595.8 463.2L1595.8 470.7L1595.8 470.7L1595.8 482.1M1619.5 464.4L1620.6 484.8M1641.2 463.3L1641.2 471.9L1643.7 471.9L1643.7 484.2M1603.7 482.4L1606.2 504.1M1627.0 484.6L1632.2 503.0M1595.5 505.0L1595.9 519.3M1616.2 502.9L1622.8 521.7M1634.2 503.0L1635.8 522.3M1599.4 518.8L1591.7 536.3M1625.6 521.9L1623.5 535.6M1636.8 522.3L1637.8 533.5M1605.8 535.6L1602.4 551.5M1616.4 536.3L1616.4 543.9L1614.0 543.9L1614.0 551.9M1636.4 533.3L1641.4 549.3M1603.6 551.5L1607.6 573.4M1620.2 551.8L1621.7 573.2M1637.7 549.6L1643.5 571.3M1605.1 573.4L1603.2 590.2M1620.8 573.2L1620.8 588.0M1638.9 572.3L1640.5 589.2M1602.2 590.4L1597.7 605.0M1621.2 588.0L1621.2 595.3L1624.7 595.3L1624.7 601.9M1634.9 589.1L1634.9 595.7L1633.0 595.7L1633.0 602.1M1602.4 605.2L1602.6 619.9M1621.2 601.9L1618.0 621.4M1643.0 603.2L1638.6 618.5M1599.5 619.8L1599.8 638.7M1622.6 620.7L1624.4 637.1M1642.4 618.5L1642.4 628.4L1643.8 628.4L1643.8 637.8M1599.1 638.6L1592.2 655.6M1613.2 637.4L1614.6 654.5M1627.0 637.3L1627.6 655.9M1641.7 637.8L1641.7 656.8M1606.0 654.8L1606.8 673.3M1619.0 654.4L1619.0 662.8L1618.1 662.8L1618.1 672.2M1602.1 673.9L1604.5 692.2M1622.9 672.6L1621.4 691.9M1635.2 674.8L1639.9 694.4M1603.5 692.3L1599.3 710.7M1621.2 691.9L1620.1 712.1M1631.0 693.6L1630.3 710.9M1606.4 711.1L1604.9 730.1M1624.9 711.5L1624.7 730.4M1643.4 710.5L1651.7 728.9M1597.5 730.4L1597.5 740.7L1586.3 740.7L1586.3 751.6M1614.4 730.4L1614.2 751.0M1629.9 730.3L1623.2 750.0M1598.1 751.3L1596.6 769.0M1617.9 751.0L1620.9 767.3M1635.5 747.7L1644.9 767.6M1604.5 769.4L1604.5 776.6L1603.0 776.6L1603.0 783.2M1625.1 766.9L1627.0 782.6M1638.5 766.4L1638.6 783.7M1604.6 783.6L1608.9 799.7M1630.6 783.2L1630.6 789.4L1624.7 789.4L1624.7 799.6" fill="none" stroke="#fbfafc" stroke-width="2.4" stroke-linejoin="round" stroke-linecap="round"/><path clip-path="url(#cpne)" d="M1476.0 221.6L1489.2 221.4L1502.3 219.8L1515.5 222.7L1528.6 221.6M1476.0 237.2L1489.2 235.1L1502.3 233.4L1515.5 233.8L1528.6 236.2M1476.0 252.5L1489.2 249.3L1502.3 250.6L1515.5 252.8L1528.6 251.5M1476.0 264.9L1489.2 266.8L1502.3 264.0L1515.5 267.0L1528.6 263.6M1476.0 277.7L1489.2 277.6L1502.3 278.5L1515.5 275.6L1528.6 279.1M1476.0 293.3L1489.2 290.7L1502.3 290.8L1515.5 293.2L1528.6 292.2M1476.0 307.4L1489.2 308.1L1502.3 306.7L1515.5 306.5L1528.6 309.4M1476.0 319.4L1489.2 319.0L1502.3 319.4L1515.5 320.8L1528.6 322.0M1476.0 334.6L1489.2 337.3L1502.3 335.0L1515.5 335.9L1528.6 335.1M1476.0 351.0L1489.2 354.1L1502.3 350.6L1515.5 351.4L1528.6 350.9M1476.0 368.4L1489.2 367.9L1502.3 367.1L1515.5 367.0L1528.6 367.6M1476.0 383.5L1489.2 381.7L1502.3 381.6L1515.5 383.6L1528.6 382.6M1476.0 394.3L1489.2 395.6L1502.3 394.2L1515.5 395.9L1528.6 393.5M1476.0 412.8L1489.2 412.1L1502.3 412.6L1515.5 412.2L1528.6 410.6M1486.2 221.4L1486.2 227.2L1483.2 227.2L1483.2 235.8M1505.0 220.4L1503.2 233.4M1521.9 222.2L1521.9 229.8L1519.8 229.8L1519.8 234.4M1492.2 234.7L1492.2 241.6L1493.6 241.6L1493.6 249.5M1512.3 233.7L1515.2 252.7M1486.8 249.9L1481.5 265.7M1500.8 250.4L1502.7 264.1M1515.4 252.8L1515.4 258.7L1512.1 258.7L1512.1 266.1M1491.6 266.3L1485.0 277.6M1504.4 264.5L1505.3 277.8M1491.8 277.8L1495.7 290.8M1512.4 276.3L1512.4 282.7L1511.6 282.7L1511.6 292.7M1485.8 291.4L1491.4 307.9M1501.3 290.8L1501.3 297.9L1502.7 297.9L1502.7 307.0M1512.7 292.7L1510.4 306.6M1492.4 307.8L1492.4 311.7L1489.5 311.7L1489.5 319.0M1503.2 306.7L1508.7 320.1M1487.0 319.0L1485.8 336.6M1498.4 319.3L1494.6 336.3M1517.7 321.0L1520.4 335.6M1485.0 336.4L1485.0 345.9L1487.3 345.9L1487.3 353.0M1504.9 335.2L1504.4 350.7M1519.0 335.7L1519.0 343.1L1520.4 343.1L1520.4 351.2M1490.4 353.8L1495.5 367.5M1504.5 350.7L1504.5 359.3L1504.8 359.3L1504.8 367.1M1516.4 351.3L1514.9 367.0M1491.2 367.7L1498.3 381.6M1512.9 367.0L1506.0 382.2M1486.0 382.1L1486.0 390.5L1487.5 390.5L1487.5 395.4M1491.8 381.7L1501.3 394.3M1506.7 382.3L1506.3 394.7M1519.1 383.3L1519.5 395.1M1494.5 395.1L1494.5 404.5L1492.8 404.5L1492.8 412.2M1506.1 394.7L1506.1 401.9L1506.0 401.9L1506.0 412.6M1529.1 222.8L1528.0 237.4L1528.3 255.0L1528.3 264.7L1528.5 275.0L1528.6 290.1L1529.3 303.6L1529.3 316.9L1528.5 332.1L1528.2 348.6L1529.2 359.8L1528.6 372.2L1529.2 387.1L1529.3 401.2M1528.6 219.4L1542.2 220.3L1555.8 218.8L1569.4 217.7L1583.0 219.3L1596.6 219.1L1610.2 220.6M1528.6 233.9L1542.2 232.0L1555.8 231.1L1569.4 230.7L1583.0 230.0L1596.6 230.1L1610.2 230.7M1528.6 247.2L1542.2 247.8L1555.8 249.6L1569.4 249.7L1583.0 249.6L1596.6 248.8L1610.2 250.2M1528.6 262.5L1542.2 259.8L1555.8 260.2L1569.4 262.6L1583.0 262.7L1596.6 260.1L1610.2 259.7M1528.6 278.4L1542.2 275.5L1555.8 279.1L1569.4 276.0L1583.0 278.4L1596.6 277.7L1610.2 277.1M1528.6 294.1L1542.2 291.6L1555.8 293.5L1569.4 291.6L1583.0 293.7L1596.6 293.1L1610.2 293.3M1528.6 307.0L1542.2 305.7L1555.8 306.4L1569.4 307.1L1583.0 307.4L1596.6 306.3L1610.2 304.0M1528.6 317.7L1542.2 319.4L1555.8 318.6L1569.4 316.5L1583.0 318.9L1596.6 318.8L1610.2 316.3M1528.6 332.2L1542.2 333.9L1555.8 332.5L1569.4 331.7L1583.0 335.0L1596.6 335.3L1610.2 335.5M1528.6 347.7L1542.2 350.6L1555.8 347.0L1569.4 349.8L1583.0 348.1L1596.6 348.7L1610.2 350.6M1528.6 365.7L1542.2 364.2L1555.8 365.8L1569.4 364.4L1583.0 364.9L1596.6 363.0L1610.2 366.7M1528.6 375.2L1542.2 375.0L1555.8 376.0L1569.4 377.8L1583.0 378.0L1596.6 375.5L1610.2 376.2M1528.6 389.2L1542.2 390.9L1555.8 388.0L1569.4 387.8L1583.0 388.5L1596.6 387.8L1610.2 390.9M1528.6 403.1L1542.2 399.5L1555.8 402.1L1569.4 400.8L1583.0 399.9L1596.6 402.8L1610.2 400.6M1535.3 219.8L1543.1 232.0M1556.8 218.7L1556.8 226.4L1554.0 226.4L1554.0 231.0M1571.3 218.0L1571.3 224.6L1564.3 224.6L1564.3 230.8M1586.4 219.2L1586.4 223.3L1595.7 223.3L1595.7 230.0M1538.8 232.5L1538.9 247.7M1558.9 231.0L1558.9 240.2L1561.9 240.2L1561.9 249.6M1579.4 230.2L1574.7 249.7M1591.9 230.0L1591.9 239.0L1583.9 239.0L1583.9 249.5M1545.7 248.3L1543.7 259.9M1560.9 249.6L1559.4 260.9M1572.8 249.7L1572.8 256.8L1575.3 256.8L1575.3 262.7M1592.5 249.1L1592.1 260.9M1538.9 260.5L1538.9 268.3L1538.5 268.3L1538.5 275.7M1562.0 261.3L1561.7 277.8M1575.5 262.6L1577.0 277.3M1591.7 261.0L1589.3 278.0M1547.5 276.9L1543.4 291.8M1554.4 278.7L1556.8 293.3M1570.2 276.2L1568.5 291.7M1584.1 278.3L1584.1 286.2L1583.9 286.2L1583.9 293.6M1599.8 277.5L1600.4 293.2M1535.2 292.9L1536.2 306.2M1554.3 293.3L1552.5 306.2M1574.9 292.4L1572.0 307.1M1580.8 293.4L1581.9 307.4M1597.8 293.1L1597.2 306.2M1542.1 305.7L1543.7 319.3M1560.1 306.6L1566.8 316.9M1575.4 307.2L1577.0 317.9M1590.2 306.8L1590.2 314.7L1591.0 314.7L1591.0 318.9M1539.2 319.1L1539.2 327.6L1536.2 327.6L1536.2 332.8M1560.1 318.0L1558.1 332.4M1575.6 317.6L1575.6 325.9L1572.8 325.9L1572.8 333.2M1583.3 318.9L1583.3 326.4L1583.5 326.4L1583.5 335.0M1595.8 318.8L1604.9 335.4M1543.3 333.8L1543.3 340.7L1549.3 340.7L1549.3 349.2M1561.0 332.2L1561.1 348.1M1578.4 333.9L1578.4 343.1L1582.0 343.1L1582.0 348.6M1592.0 335.2L1592.0 343.3L1591.6 343.3L1591.6 348.6M1541.6 350.4L1543.6 364.4M1557.2 347.3L1560.8 365.3M1578.1 348.7L1578.1 358.1L1581.3 358.1L1581.3 364.8M1592.4 348.6L1594.0 363.4M1546.6 364.7L1547.0 375.4M1562.4 365.1L1555.9 376.0M1580.0 364.8L1584.7 377.7M1595.9 363.1L1597.2 375.5M1542.3 375.0L1542.3 384.9L1541.9 384.9L1541.9 390.8M1559.8 376.5L1559.8 383.6L1559.1 383.6L1559.1 387.9M1574.4 377.9L1579.9 388.3M1589.4 376.8L1591.3 388.1M1601.4 375.7L1601.4 384.3L1605.8 384.3L1605.8 389.6M1546.1 390.0L1546.1 396.6L1540.5 396.6L1540.5 399.5M1555.5 388.1L1556.3 402.0M1573.7 388.0L1567.6 401.0M1591.9 388.1L1599.3 402.3M1610.5 222.8L1609.8 232.6L1610.3 246.7L1610.8 263.9L1610.1 279.4L1610.1 295.0L1610.3 305.9L1609.8 320.1L1610.0 330.8L1610.6 345.8L1609.5 355.7L1609.9 366.4L1609.9 379.1L1610.5 390.3L1610.0 405.0M1610.2 222.2L1624.6 223.3L1639.1 223.0L1653.5 221.1M1610.2 237.1L1624.6 235.7L1639.1 237.6L1653.5 239.3M1610.2 250.2L1624.6 250.7L1639.1 250.7L1653.5 249.5M1610.2 261.6L1624.6 261.6L1639.1 260.8L1653.5 261.6M1610.2 273.8L1624.6 272.7L1639.1 274.1L1653.5 274.9M1610.2 284.8L1624.6 285.7L1639.1 286.4L1653.5 286.0M1610.2 301.2L1624.6 302.3L1639.1 300.2L1653.5 298.9M1610.2 313.7L1624.6 317.2L1639.1 314.2L1653.5 314.2M1610.2 328.5L1624.6 328.8L1639.1 328.4L1653.5 330.3M1610.2 343.2L1624.6 344.2L1639.1 344.6L1653.5 342.7M1610.2 356.8L1624.6 357.1L1639.1 357.6L1653.5 357.1M1610.2 373.7L1624.6 372.3L1639.1 371.3L1653.5 373.5M1610.2 385.0L1624.6 384.8L1639.1 383.5L1653.5 384.2M1610.2 396.4L1624.6 397.9L1639.1 397.6L1653.5 394.5M1610.2 406.7L1624.6 407.3L1639.1 407.5L1653.5 407.2M1629.1 223.2L1620.4 236.1M1636.4 223.0L1635.3 237.1M1625.7 235.8L1625.7 241.5L1620.5 241.5L1620.5 250.6M1638.7 237.5L1638.3 250.7M1618.9 250.5L1621.4 261.6M1632.9 250.7L1633.2 261.1M1617.4 261.6L1615.9 273.3M1635.2 261.0L1635.2 268.1L1635.5 268.1L1635.5 273.9M1626.2 272.9L1631.1 286.0M1640.0 274.1L1637.3 286.3M1629.1 285.9L1620.1 302.0M1638.8 286.4L1638.4 300.3M1627.6 301.9L1626.3 316.9M1636.7 300.6L1638.1 314.4M1623.0 316.8L1624.2 328.8M1637.4 314.6L1629.1 328.7M1625.2 328.8L1625.3 344.2M1637.8 328.4L1638.6 344.6M1627.5 344.3L1625.5 357.1M1639.3 344.6L1639.3 350.1L1638.2 350.1L1638.2 357.6M1624.2 357.1L1626.7 372.1M1643.9 357.4L1642.6 371.9M1628.4 372.0L1625.3 384.7M1642.8 371.9L1642.8 378.5L1634.6 378.5L1634.6 383.9M1622.8 384.8L1628.0 397.8M1641.4 383.6L1640.1 397.4M1629.0 397.8L1626.3 407.4M1646.6 396.0L1646.6 400.7L1647.7 400.7L1647.7 407.3" fill="none" stroke="#fbfafc" stroke-width="2.4" stroke-linejoin="round" stroke-linecap="round"/><path d="M1476 229.75L1476.5 300L1475.6 398L1560 397.4L1647.5 398.6" fill="none" stroke="#fbfafc" stroke-width="2.4" stroke-linejoin="round" stroke-linecap="round"/><path d="M1269.0 225.8L1268.7 242.5L1269.4 263.8L1268.4 279.7L1268.8 296.0L1268.3 317.6L1268.8 331.0L1269.7 344.2L1269.5 362.2L1268.6 374.8L1269.3 390.2L1269.1 409.3" fill="none" stroke="#fbfafc" stroke-width="2.4" stroke-linejoin="round" stroke-linecap="round"/><path d="M939.7 229.75L940.2 253M985.6 229.75L985.2 253M1024.6 229.75L1024.2 253" fill="none" stroke="#fbfafc" stroke-width="2.4" stroke-linejoin="round" stroke-linecap="round"/><path d="M651.9 227.5L651.9 402.0M612.8 227.5L612.8 293.7L620.3 295.2L621.1 402.0M594.0 378.6L613.6 378.6L613.6 402.0M651.9 277.9L724.1 277.9L724.1 312.5M709.8 277.9L710.6 236.5L718.8 234.3L718.8 227.5M651.9 332.8L675.2 332.8L676.7 314.0L724.1 312.5L727.9 316.2L734.6 332.8L729.4 334.3L729.4 349.3M651.9 350.1L745.9 350.1L758.7 356.8L759.4 366.6L806.1 366.6L806.8 320.0M706.0 350.1L708.3 402.0M711.3 266.6L741.4 268.9L742.1 278.6L797.0 277.9M778.2 227.5L779.7 259.1L774.5 262.8L797.0 277.1L802.3 265.8L804.6 265.1L803.1 244.0L808.3 241.0L808.3 227.5M804.6 265.1L858.7 266.6L861.0 266.6L861.0 227.5M843.7 267.4L848.2 281.6L843.7 288.4L789.5 285.4L789.5 278.6M843.7 268.1L867.7 269.6L867.7 274.1L885.8 274.9L885.8 308.7L872.2 306.5L860.2 288.4L816.6 290.7M765.5 280.1L767.0 334.3M789.5 286.2L790.3 326.0M768.5 326.8L806.1 326.8M727.9 314.0L766.2 319.2M734.6 332.8L772.2 335.0L759.4 336.5L760.2 356.8M806.8 320.0L854.9 323.0L876.7 315.5L875.2 307.2M854.9 323.0L855.7 344.8L848.2 341.0L842.2 347.8L824.1 347.8L824.1 402.0M855.7 344.8L869.2 347.8L870.7 362.9L899.3 362.9M869.2 347.8L887.3 340.3L888.8 332.8L899.3 331.3M887.3 290.7L899.3 290.7M824.1 374.9L866.2 375.6L869.2 388.4L873.7 389.9L875.2 400.5M759.4 366.6L780.5 367.4L780.5 386.9L774.5 387.7L774.5 394.4L762.4 394.4L764.0 402.0M863.2 349.3L864.7 374.9M651.9 370.0L651.9 508.4M619.6 370.0L620.3 400.1M594.0 379.0L613.6 379.0L612.8 402.3L595.5 409.1L595.5 508.4M612.8 402.3L622.6 402.3L634.6 393.3L651.9 391.1M633.9 394.8L633.9 425.6L646.6 443.7L643.6 453.5L649.6 454.2M595.5 455.7L649.6 455.7M651.9 418.9L703.8 418.9L700.8 427.2L708.3 439.2L705.3 446.0L684.2 452.7L686.5 484.3M651.9 440.7L660.2 440.7L660.9 445.2L670.7 446.0L676.0 482.8L686.5 483.6M696.3 418.9L695.5 403.1L761.7 403.8M706.8 370.0L708.3 403.1M705.3 446.7L723.3 446.0L724.1 440.7L742.9 439.9L762.4 426.4M724.1 446.0L724.1 485.8M761.7 394.1L763.2 475.3M761.7 394.1L774.5 397.1L774.5 388.0L780.5 387.3L780.5 370.0M763.2 409.9L806.1 412.1L803.8 452.7L824.1 452.7M806.8 422.6L824.1 422.6L824.1 370.0M826.4 431.7L869.2 430.9M826.4 431.7L824.9 475.3M824.9 376.0L866.2 376.0L869.2 388.0L873.7 389.6L875.2 398.6L879.8 397.1L881.3 394.1M870.7 400.1L899.3 400.1M870.7 400.1L869.2 430.9L870.7 475.3M864.0 370.0L864.7 376.0" fill="none" stroke="#fbfafc" stroke-width="2.5" stroke-linejoin="round" stroke-linecap="round"/>
<polyline points="1277.0,582.7 1277.5,585.3 1292.0,585.6 1307.5,586.3 1326.3,593.8 1345.0,593.8 1363.8,596.6 1371.3,590.0 1375.0,594.7 1382.5,599.4 1384.4,607.8 1397.5,609.7 1401.3,617.2 1410.6,614.4 1418.1,606.9 1425.6,617.2 1435.0,608.8 1439.7,601.3 1459.4,609.7 1463.1,621.9 1476.3,611.6 1468.8,603.1 1455.6,600.3 1450.0,593.8 1455.6,586.3 1457.5,567.5 1465.0,558.1 1481.9,555.3 1500.6,556.3 1513.8,560.9 1517.5,547.0 1521.0,547.0 1519.4,558.1 1536.3,560.0 1555.0,556.3 1557.0,549.0 1560.0,549.5 1577.5,553.4 1592.5,556.3 1607.5,565.6 1622.5,575.0 1625.3,586.3 1635.6,590.0 1647.5,586.3" fill="none" stroke="#f4f3f6" stroke-width="1.6"/>
<polyline points="594.5,508.7 686,508.7 686,487.6 757,488" fill="none" stroke="#8e8d92" stroke-width="1.1"/>
<path d="M899.5 253.6L899.5 477.0L752.0 477.0L757.0 488.0L764.4 495.3L780.3 509.4L796.3 526.3L815.0 539.4L822.5 546.9L830.0 561.9L833.8 578.8L842.2 590.0L856.3 603.1L867.5 606.9L878.8 614.4L890.0 621.9L897.5 620.0L905.0 605.0L912.5 588.1L920.0 583.4L929.4 579.7L946.3 582.5L961.3 583.4L970.6 590.0L981.9 599.4L991.3 610.6L998.8 625.6L1006.3 638.8L1013.8 656.0L1024.4 664.4L1033.0 679.8L1043.3 688.4L1046.7 702.2L1049.3 714.2L1058.8 729.7L1063.9 741.7L1079.4 748.6L1096.6 755.5L1113.8 757.2L1132.7 762.3L1137.8 760.6L1136.0 750.3L1134.4 733.0L1131.0 719.4L1132.7 702.2L1136.0 686.7L1141.3 671.3L1155.0 662.7L1170.5 652.3L1179.0 645.5L1196.3 636.9L1204.9 630.0L1212.0 625.0L1224.0 616.6L1238.7 601.8L1253.5 591.5L1265.0 588.0L1277.0 582.7L1277.5 572.0L1280.0 559.0L1284.5 544.3L1288.5 532.0L1288.0 520.0L1283.0 508.0L1276.6 494.0L1271.9 480.0L1267.0 470.6L1266.4 402.7L1242.2 396.4L1237.5 392.5L1223.4 383.9L1215.6 386.3L1196.9 387.0L1186.0 387.0L1175.0 392.5L1164.0 386.3L1150.0 385.5L1140.6 387.8L1129.7 387.8L1118.8 384.7L1107.8 381.6L1100.0 373.8L1089.0 375.3L1084.4 371.4L1065.6 370.6L1054.7 366.0L1046.9 358.9L1039.0 361.3L1025.8 353.4L1023.0 353.4L1023.0 253.6Z" fill="#f7fbfd" stroke="#f7fbfd" stroke-width="2.2" stroke-linejoin="round"/>
<path d="M953.2 496.8L954.1 520.9L954.1 520.9L971.3 515.7L974.0 498.6L972.5 497.4ZM1113.6 531.8L1110.2 547.7L1131.3 552.9L1135.8 545.4L1132.6 533.4ZM1176.3 548.1L1178.4 546.3L1182.5 527.0L1180.9 526.1L1164.7 538.2ZM1088.5 558.9L1088.4 558.9L1063.8 571.2L1062.5 576.9L1068.2 588.0L1085.1 578.4ZM1111.0 572.9L1132.1 564.4L1130.7 556.0L1108.7 550.5L1098.5 557.9ZM1086.2 581.4L1069.1 591.0L1069.1 602.3L1073.2 605.1L1089.1 605.1L1090.2 604.3L1092.9 589.3ZM1093.5 603.4L1117.6 601.6L1119.7 599.3L1119.1 596.6L1110.0 582.9L1096.0 589.9ZM1187.9 589.2L1197.2 609.8L1212.7 602.8L1213.6 589.4L1199.7 584.8ZM1213.8 605.6L1197.7 613.0L1197.1 614.4L1203.8 628.9L1204.0 628.8L1211.1 623.7L1223.0 615.4L1223.3 615.1ZM1117.6 679.9L1105.9 696.6L1106.5 697.3L1115.5 698.7L1122.4 698.2L1131.6 700.0L1134.5 686.3L1135.2 684.1ZM1022.8 661.1L1023.8 660.2L1030.5 660.2L1016.6 653.9L1014.8 654.4L1015.1 655.0ZM1048.3 702.4L1048.5 703.4L1050.2 702.0L1048.5 702.0ZM776.2 478.6L754.4 478.6L758.3 487.1L765.5 494.2L776.2 503.7ZM1025.6 663.3L1025.6 663.4L1034.2 678.8L1044.7 687.5L1047.5 698.9L1063.5 698.9L1063.6 699.2L1063.9 699.3L1063.9 698.9L1071.0 698.9L1071.0 694.7L1071.9 694.6L1074.0 693.2L1070.9 677.6L1078.5 663.6L1070.0 657.1L1054.5 658.4L1049.7 655.9L1035.6 661.1L1036.0 663.3ZM961.3 408.5L961.3 389.6L943.8 389.6L943.8 408.5ZM1137.9 411.6L1133.5 411.6L1133.5 430.0L1152.8 430.0L1152.8 411.6L1152.7 411.6L1152.6 410.9L1149.6 408.7L1137.9 411.3ZM1155.9 411.3L1155.9 430.0L1173.8 430.0L1173.8 411.6L1173.6 411.6L1173.6 410.6L1171.6 409.0ZM974.7 451.3L974.7 433.1L956.3 433.1L956.3 451.3ZM876.2 494.6L880.0 498.7L884.3 494.0L884.3 493.1L887.9 493.1L887.9 478.6L861.8 478.6L861.8 478.9L876.2 494.5ZM933.4 493.1L933.4 494.0L933.9 494.5L951.0 494.6L951.0 493.1L951.9 493.1L951.9 475.2L930.6 475.2L930.6 493.1ZM955.0 493.8L971.6 494.3L971.6 493.1L972.5 493.1L972.5 475.2L955.0 475.2Z" fill="#fdebd7" stroke="#fde0bd" stroke-width="1" stroke-linejoin="miter"/>
<path d="M1066.1 386.1L1066.5 386.5L1085.0 386.5L1090.1 376.7L1088.5 376.9L1083.8 372.9L1069.3 372.3ZM1224.6 430.4L1224.9 430.2L1226.6 409.8L1217.7 407.4L1215.6 409.0L1215.6 426.7ZM901.0 507.2L907.2 503.8L907.6 497.1L903.6 496.2L886.4 496.2L882.6 500.5L883.0 500.9ZM927.2 516.7L931.6 496.4L931.3 496.2L911.7 496.2L911.0 496.2L910.8 496.5L910.3 504.3L914.1 509.2L915.5 508.7L926.2 516.7ZM987.6 524.2L994.5 518.2L990.8 498.2L977.0 499.5L974.3 516.2L980.8 520.9L987.6 520.9ZM1017.4 590.0L1017.4 612.0L1030.5 612.0L1040.5 605.7L1035.1 595.4ZM997.9 620.4L1000.2 624.9L1007.7 638.1L1013.6 651.6L1015.7 650.9L1022.2 638.6L1011.4 618.3ZM1016.4 615.1L1014.2 616.9L1024.6 636.4L1029.4 633.3L1029.4 615.1ZM1105.9 454.4L1108.6 470.7L1123.6 467.2L1123.6 454.4ZM1147.3 465.3L1152.9 470.4L1167.5 463.8L1166.1 454.4L1147.3 454.4ZM1228.9 473.8L1238.0 479.5L1247.7 477.3L1243.7 457.4L1238.1 458.4ZM1251.5 496.3L1252.9 494.5L1250.7 481.3L1249.2 480.2L1239.1 482.4L1236.6 499.7ZM1100.1 503.3L1110.2 514.6L1125.3 505.0L1122.8 495.8L1115.1 492.6ZM1125.8 495.1L1128.4 504.6L1133.7 507.5L1149.2 498.1L1149.8 489.0L1132.1 487.3ZM1132.4 510.3L1127.1 507.5L1111.4 517.5L1110.6 524.2L1113.3 528.7L1133.0 530.3L1137.0 523.2ZM1091.7 559.0L1088.2 579.0L1095.0 586.9L1109.0 580.0L1109.0 575.3L1095.5 559.2ZM1112.1 580.4L1120.5 593.2L1135.9 570.0L1135.9 569.9L1133.4 567.2L1112.1 575.8ZM1200.2 550.2L1199.3 560.6L1202.0 563.8L1220.2 561.8L1221.0 557.7L1212.3 548.0ZM1184.0 565.7L1179.6 577.9L1186.3 586.5L1198.2 582.0L1199.7 566.0L1197.1 562.8ZM1201.3 582.1L1215.0 586.6L1224.9 580.4L1225.7 577.8L1220.5 564.9L1202.7 566.9ZM1226.0 583.4L1216.7 589.2L1215.8 603.2L1225.5 612.9L1237.7 600.6L1240.9 598.4ZM1032.5 614.4L1032.5 632.6L1047.5 632.6L1047.5 609.7L1042.8 607.9ZM1050.6 631.8L1071.1 631.8L1071.1 607.5L1067.3 604.8L1050.6 609.8ZM1074.2 608.2L1074.2 631.5L1091.1 633.6L1096.6 627.5L1088.6 608.2ZM1092.2 606.6L1091.5 607.2L1099.5 626.3L1113.6 627.2L1115.1 625.6L1116.6 604.7ZM1050.0 634.9L1051.3 653.3L1055.1 655.3L1069.0 654.2L1070.5 634.9ZM1099.1 629.4L1093.3 635.7L1097.1 659.5L1104.8 659.9L1113.6 635.6L1112.8 630.3ZM1156.8 633.0L1156.0 632.8L1153.5 634.8L1151.2 639.9L1153.4 661.9L1154.2 661.4L1169.6 651.0L1171.9 649.2ZM1115.9 638.2L1108.5 658.8L1130.3 652.6L1129.8 648.5ZM1108.0 662.2L1117.9 676.7L1136.3 681.2L1140.0 670.3L1146.3 666.4L1131.7 655.4ZM1081.4 664.7L1074.1 678.0L1077.0 692.7L1088.9 695.7L1091.6 694.4L1091.6 664.1ZM1094.7 663.3L1094.7 694.0L1103.2 695.0L1115.1 678.1L1104.8 663.0L1096.1 662.6ZM1066.5 702.0L1070.7 718.8L1085.5 720.9L1087.4 698.5L1075.9 695.6L1074.1 696.8L1074.1 702.0ZM1088.5 722.1L1088.5 722.1L1102.1 722.1L1106.9 715.4L1104.3 699.4L1103.2 698.1L1093.4 697.0L1090.5 698.3ZM1070.0 721.8L1060.7 730.2L1065.1 740.5L1080.0 747.2L1082.8 748.3L1086.2 724.2L1086.1 724.1ZM1106.6 748.9L1106.6 731.7L1102.1 725.2L1089.2 725.2L1085.7 749.5L1097.0 754.0L1103.2 754.6ZM1109.7 732.6L1109.7 747.0L1133.3 737.9L1132.9 733.3L1132.3 731.1L1124.7 730.9ZM779.3 506.1L779.3 506.5L781.3 508.3L787.8 515.1L797.3 525.2L806.4 531.6L806.5 531.5L816.0 538.2L819.5 541.7L820.4 540.1L820.4 478.6L779.3 478.6L779.3 506.1ZM859.9 481.4L855.9 520.0L880.1 538.3L898.3 509.5L880.3 503.3L880.4 502.6L879.9 502.0L879.4 502.5ZM868.7 605.8L879.7 613.1L890.3 620.2L896.4 618.7L903.6 604.3L911.3 587.0L920.3 581.4L920.4 581.6L921.2 581.3L921.2 581.3L924.0 580.2L924.3 579.8L911.7 569.0L911.9 568.7L911.2 567.8L909.1 566.0L908.6 566.5L880.5 542.5L868.7 551.6ZM882.6 540.2L889.6 546.0L889.5 546.2L908.8 562.6L909.1 562.1L917.5 569.0L917.5 557.6L926.2 555.9L927.6 541.2L931.7 541.1L931.8 541.3L936.0 541.3L936.0 541.0L949.9 540.7L948.4 537.0L949.3 536.7L947.3 529.0L944.7 522.9L927.7 519.8L926.3 519.8L925.9 520.3L915.0 512.2L912.9 512.9L912.3 511.8L908.3 506.7L902.3 510.0L901.9 510.8L901.3 510.6ZM920.6 572.5L927.8 578.7L928.1 578.6L928.2 577.9L946.5 581.0L951.3 581.3L952.0 556.1L952.4 556.0L952.4 543.9L952.0 543.7L938.5 544.0L938.5 544.3L930.4 544.3L929.1 558.5L920.6 560.2ZM948.5 524.0L950.2 528.0L953.5 541.0L955.5 541.6L955.5 556.2L968.5 556.2L968.6 556.7L968.9 556.8L969.7 556.6L969.7 556.2L984.5 556.2L984.5 551.7L984.7 551.6L985.6 540.4L984.9 538.8L985.1 528.2L984.5 528.2L984.5 524.0L979.0 524.0L978.9 523.3L972.4 518.5L955.8 523.6L955.8 524.0ZM954.6 572.6L954.7 572.6L954.4 581.5L960.6 581.9L961.0 581.3L971.5 588.8L983.0 598.3L992.6 609.7L993.6 611.8L993.6 587.2L994.3 587.1L995.2 585.7L994.3 583.9L993.6 583.9L993.6 561.0L989.4 561.0L989.3 560.0L987.6 557.6L987.6 559.2L971.4 559.2L968.8 560.0L966.9 559.2L955.0 559.2ZM901.0 255.1L901.0 273.4L933.0 273.4L933.0 255.6L930.1 255.6L930.1 255.1ZM936.1 255.1L936.1 273.4L956.3 273.4L956.3 255.6L956.3 255.6L956.3 255.1ZM959.4 255.1L959.4 273.4L979.4 273.4L979.4 255.6L978.8 255.6L978.8 255.1ZM982.5 255.1L982.5 273.4L1000.0 273.4L1000.0 255.1ZM933.0 276.5L901.0 276.5L901.0 295.4L933.0 295.4ZM1021.5 295.4L1021.5 276.5L1003.1 276.5L1003.1 295.4ZM979.4 317.8L979.4 298.5L959.4 298.5L959.4 317.8ZM956.3 340.1L956.3 320.9L936.1 320.9L936.1 340.1ZM940.7 362.1L940.7 343.2L923.2 343.2L923.2 362.1ZM920.1 365.2L901.0 365.2L901.0 386.5L920.1 386.5ZM984.2 430.0L984.2 411.6L964.4 411.6L964.4 430.0ZM933.5 433.1L901.0 433.1L901.0 451.3L933.5 451.3ZM1124.8 451.3L1124.8 433.1L1106.0 433.1L1106.0 451.3ZM1148.5 451.3L1148.5 433.1L1127.9 433.1L1127.9 451.3ZM1169.1 451.3L1169.1 433.1L1151.6 433.1L1151.6 451.3ZM1186.3 443.9L1186.3 433.1L1172.2 433.1L1172.2 451.3L1186.3 451.3L1186.3 447.3L1188.3 447.3L1186.9 443.9ZM933.0 454.4L901.0 454.4L901.0 472.1L933.0 472.1ZM954.1 472.1L954.1 454.4L936.1 454.4L936.1 472.1ZM974.2 472.1L974.2 454.4L957.2 454.4L957.2 472.1ZM994.5 472.1L994.5 454.4L977.3 454.4L977.3 472.1ZM1037.5 472.1L1037.5 454.4L1020.3 454.4L1020.3 472.1ZM905.1 493.1L905.1 493.4L908.5 494.2L908.5 475.2L901.0 475.2L901.0 478.6L891.0 478.6L891.0 493.1ZM927.5 493.1L927.5 475.2L911.6 475.2L911.6 493.1ZM975.6 496.0L976.1 496.5L989.3 495.3L989.3 475.2L975.6 475.2Z" fill="#fdd19c" stroke="#fdc57c" stroke-width="1" stroke-linejoin="miter"/>
<path d="M1088.5 386.5L1089.7 386.5L1089.7 395.5L1093.6 403.9L1102.8 403.6L1109.5 383.7L1107.0 383.0L1099.4 375.4L1093.9 376.2ZM1126.9 388.6L1118.4 386.2L1112.5 384.5L1105.8 404.5L1110.3 408.2L1126.2 406.5ZM1130.0 389.4L1129.2 407.1L1131.1 408.5L1136.3 408.5L1148.4 405.8L1147.7 387.7L1140.8 389.4ZM1150.8 387.1L1151.5 406.3L1154.4 408.5L1170.5 406.0L1171.0 392.0L1163.6 387.8ZM1173.6 406.7L1175.6 408.3L1193.2 406.9L1193.2 388.6L1186.4 388.6L1175.0 394.3L1174.1 393.7ZM1241.5 406.3L1242.8 408.4L1250.4 413.8L1264.9 412.2L1264.9 403.9L1244.0 398.5ZM1197.1 409.8L1197.1 418.9L1197.6 424.1L1205.1 429.4L1212.5 426.6L1212.5 409.8ZM1239.0 408.2L1229.7 410.0L1228.1 429.5L1232.9 429.1L1240.0 409.6ZM930.2 517.2L951.0 520.9L951.0 520.9L950.1 497.6L934.5 497.5ZM993.9 497.6L997.4 517.3L1011.2 517.8L1013.1 496.6ZM1012.0 520.9L996.7 520.3L988.2 527.8L988.0 538.1L988.2 538.5L1012.1 538.5L1012.1 521.0ZM1015.2 521.8L1015.2 538.5L1027.0 538.5L1029.8 521.2ZM988.6 541.6L987.7 552.5L991.5 557.9L996.7 557.9L996.7 557.9L1012.1 555.5L1012.1 541.6ZM996.7 589.0L996.7 617.4L1011.6 615.1L1014.3 612.8L1014.3 589.0ZM1085.2 454.4L1085.2 460.8L1085.5 466.8L1096.3 475.4L1105.4 472.5L1105.7 472.2L1102.7 454.4ZM1126.7 454.4L1126.7 467.6L1128.9 469.0L1144.2 464.8L1144.2 454.4ZM1170.7 463.7L1180.2 469.6L1192.4 452.2L1190.0 450.4L1189.4 450.4L1189.4 454.4L1169.2 454.4ZM1212.1 471.0L1219.0 475.4L1225.7 473.0L1235.0 457.5L1223.1 450.7L1209.1 456.0ZM1061.4 475.2L1058.0 477.2L1056.0 499.1L1060.1 501.1L1071.8 495.7L1074.7 490.1L1067.8 477.0L1061.9 475.2ZM1170.5 486.2L1179.6 473.3L1179.4 472.7L1169.1 466.4L1154.2 473.2L1154.2 484.7ZM1195.4 482.1L1197.5 496.6L1201.4 499.6L1217.2 493.5L1217.2 478.0L1210.7 473.7ZM1220.3 478.2L1220.3 493.8L1232.0 501.8L1233.3 500.9L1236.0 481.9L1226.6 476.0ZM1067.9 523.0L1079.6 521.3L1084.2 510.3L1072.6 498.8L1061.9 503.7L1067.6 522.9ZM1077.5 491.5L1074.8 496.6L1086.3 508.1L1096.3 502.6L1090.2 489.2ZM1150.4 501.0L1135.6 509.9L1139.8 521.8L1153.1 521.8L1161.7 512.3ZM1030.0 539.3L1032.1 540.7L1043.3 538.5L1045.6 528.8L1035.7 519.4L1033.1 520.7ZM1053.1 549.8L1066.0 542.0L1066.0 525.5L1048.6 529.6L1046.2 539.5ZM1107.6 523.2L1108.3 517.1L1097.7 505.3L1087.2 511.1L1082.6 522.2L1088.2 526.7ZM1107.0 547.9L1110.7 530.4L1108.2 526.3L1089.5 529.7L1091.8 555.9L1095.8 556.1ZM1139.6 524.9L1135.5 532.2L1138.7 544.1L1151.7 544.1L1157.9 537.6L1152.8 524.9ZM1155.6 523.7L1160.8 536.5L1161.7 536.6L1178.5 524.0L1170.4 513.4L1164.6 513.7ZM1181.7 545.8L1197.5 547.8L1193.0 527.2L1185.5 527.6ZM1202.5 522.2L1195.9 526.3L1200.5 547.0L1211.7 544.9L1214.2 535.5L1205.8 523.4ZM1053.7 554.8L1063.0 568.1L1085.1 557.1L1067.5 544.8L1054.0 552.8ZM1139.3 570.5L1147.8 587.6L1153.7 588.5L1163.6 575.7L1158.1 567.4ZM1175.3 554.0L1161.4 562.1L1160.5 565.4L1166.4 574.4L1176.8 576.4L1181.2 564.5ZM1197.0 550.9L1180.3 548.8L1177.7 551.0L1177.5 551.6L1183.6 562.6L1196.3 559.8ZM1237.2 549.8L1224.0 558.2L1223.1 563.1L1228.2 575.7L1246.2 568.2L1241.2 549.8ZM1249.4 567.9L1254.2 569.9L1271.9 557.0L1259.5 546.8L1245.2 547.9L1244.1 548.8ZM1256.2 572.2L1260.6 587.7L1264.5 586.5L1275.5 581.7L1276.0 571.8L1278.3 559.6L1275.2 558.7L1274.9 558.6ZM1043.7 605.0L1049.1 607.0L1066.0 601.9L1066.0 590.5L1060.0 578.9L1044.3 581.5L1037.9 594.1ZM1132.1 600.0L1144.9 588.7L1137.3 573.6L1122.2 596.3L1122.7 598.4ZM1142.6 611.4L1152.2 612.8L1162.2 605.3L1153.4 591.6L1147.3 590.7L1134.8 601.8ZM1166.1 577.5L1156.2 590.2L1165.2 604.2L1165.7 604.3L1183.7 588.2L1176.9 579.6ZM1177.6 617.3L1194.3 613.2L1194.8 611.9L1185.2 590.9L1168.4 606.1ZM1253.2 572.8L1248.1 570.7L1228.6 578.9L1227.9 581.0L1243.5 596.6L1252.8 590.1L1257.7 588.6ZM1118.3 624.9L1132.5 626.1L1132.8 625.9L1140.0 613.1L1131.8 603.1L1121.9 601.4L1119.8 603.7ZM1136.2 626.1L1151.9 632.1L1154.0 630.5L1151.3 615.8L1142.7 614.6ZM1183.5 641.5L1195.5 635.6L1201.3 630.9L1194.6 616.3L1178.3 620.3L1177.7 623.4ZM1117.2 627.9L1115.8 629.4L1116.6 634.9L1130.7 645.3L1133.5 639.7L1131.6 629.1ZM1133.5 652.8L1149.1 664.6L1150.5 663.7L1148.2 641.2L1136.1 641.5L1132.9 647.9ZM1059.2 727.4L1067.8 719.7L1063.4 702.3L1062.0 702.0L1055.1 702.0L1049.3 706.8L1050.8 713.6ZM1106.6 754.9L1114.1 755.7L1132.7 760.7L1136.0 759.6L1134.5 750.5L1133.6 741.1L1109.2 750.6ZM1134.7 628.9L1136.4 638.4L1148.6 638.1L1150.1 634.7ZM857.1 478.6L823.5 478.6L823.5 537.8L852.8 519.8ZM956.3 295.4L956.3 276.5L936.1 276.5L936.1 295.4ZM979.4 295.4L979.4 276.5L959.4 276.5L959.4 295.4ZM1000.0 295.4L1000.0 276.5L982.5 276.5L982.5 295.4ZM933.0 298.5L901.0 298.5L901.0 317.8L933.0 317.8ZM956.3 317.8L956.3 298.5L936.1 298.5L936.1 317.8ZM1000.0 317.8L1000.0 298.5L982.5 298.5L982.5 317.8ZM933.0 320.9L901.0 320.9L901.0 340.1L933.0 340.1ZM979.4 340.1L979.4 320.9L959.4 320.9L959.4 340.1ZM1021.5 340.1L1021.5 320.9L1003.1 320.9L1003.1 340.1ZM920.1 343.2L901.0 343.2L901.0 362.1L920.1 362.1ZM961.3 362.1L961.3 343.2L943.8 343.2L943.8 362.1ZM1023.6 358.0L1025.6 355.0L1025.5 354.9L1021.5 354.9L1021.5 343.2L1007.9 343.2L1007.9 362.1L1022.8 362.1L1022.8 358.0ZM940.7 386.5L940.7 365.2L923.2 365.2L923.2 386.5ZM961.3 386.5L961.3 365.2L943.8 365.2L943.8 386.5ZM1004.8 386.5L1004.8 365.2L987.3 365.2L987.3 386.5ZM940.7 408.5L940.7 389.6L923.2 389.6L923.2 408.5ZM984.2 408.5L984.2 389.6L964.4 389.6L964.4 408.5ZM1048.9 389.6L1046.7 389.6L1046.7 408.5L1065.1 408.5L1065.1 389.6L1064.5 389.6L1064.4 388.7L1063.8 388.0L1049.2 388.3L1048.9 388.6ZM1086.6 397.2L1086.6 389.6L1068.2 389.6L1068.2 408.5L1086.6 408.5L1086.6 408.5L1087.5 408.5L1090.8 405.2L1087.2 397.3ZM920.1 411.6L901.0 411.6L901.0 430.0L920.1 430.0ZM940.7 430.0L940.7 411.6L923.2 411.6L923.2 430.0ZM1004.8 430.0L1004.8 411.6L987.3 411.6L987.3 430.0ZM1043.6 430.0L1043.6 411.6L1025.9 411.6L1025.9 430.0ZM1086.6 430.0L1086.6 411.6L1068.2 411.6L1068.2 430.0ZM1089.7 410.5L1089.7 430.0L1108.1 430.0L1108.1 410.3L1103.5 406.6L1093.3 407.0ZM1111.4 411.1L1111.4 411.6L1111.2 411.6L1111.2 430.0L1130.4 430.0L1130.4 411.6L1129.4 411.6L1129.3 410.9L1127.2 409.4ZM1176.9 411.3L1176.9 430.0L1194.0 430.0L1194.0 424.0L1194.5 423.9L1194.2 420.4L1194.0 420.4L1194.0 411.6L1193.4 411.6L1193.3 410.0ZM953.2 451.3L953.2 433.1L936.6 433.1L936.6 451.3ZM997.1 451.3L997.1 433.1L977.8 433.1L977.8 451.3ZM1040.2 451.3L1040.2 433.1L1021.7 433.1L1021.7 451.3ZM1059.5 451.3L1059.5 433.1L1043.3 433.1L1043.3 451.3ZM1102.9 451.3L1102.9 433.1L1084.6 433.1L1084.6 451.3ZM1017.2 472.1L1017.2 454.4L997.6 454.4L997.6 472.1ZM1042.9 472.1L1043.0 472.4L1056.2 474.7L1059.5 472.8L1059.5 472.1L1059.8 472.1L1059.8 454.4L1040.6 454.4L1040.6 472.1ZM1016.0 493.1L1016.2 493.1L1016.2 493.8L1033.6 496.0L1033.8 494.5L1033.9 493.1L1037.5 493.1L1037.5 475.2L1016.0 475.2Z" fill="#fca673" stroke="#fc8f52" stroke-width="1" stroke-linejoin="miter"/>
<path d="M1046.8 360.9L1046.5 360.6L1038.8 363.0L1028.2 356.6L1025.9 359.9L1025.9 369.9L1027.5 372.7L1042.3 371.9ZM1045.1 373.4L1049.5 385.3L1063.2 385.0L1066.2 372.2L1065.3 372.1L1053.9 367.3L1049.2 363.1ZM1196.3 406.7L1213.5 406.7L1215.8 405.0L1215.2 387.9L1196.9 388.6L1196.3 388.6ZM1228.3 407.1L1238.6 405.2L1241.1 397.5L1236.6 393.8L1223.2 385.6L1218.2 387.1L1218.9 404.5ZM1247.5 430.6L1248.4 416.1L1242.4 411.9L1236.0 429.7L1244.5 433.4ZM1251.4 416.8L1250.7 429.8L1265.1 430.1L1265.0 415.3ZM1191.8 447.9L1195.0 450.3L1200.1 449.9L1203.2 431.8L1197.1 427.6L1197.1 433.1L1189.4 433.1L1189.4 442.0ZM1207.5 453.3L1221.8 447.9L1223.0 433.1L1214.0 429.4L1206.3 432.3L1203.1 450.5ZM1244.3 454.2L1245.4 453.3L1243.4 436.3L1233.7 432.1L1226.9 432.7L1226.1 433.1L1224.9 448.1L1237.4 455.3ZM1249.6 432.8L1246.5 435.8L1248.4 452.4L1265.3 452.4L1265.1 433.2ZM1014.3 518.7L1031.3 518.1L1034.7 516.4L1038.0 503.0L1034.2 499.2L1016.2 496.8ZM1015.2 555.6L1029.3 557.6L1030.2 543.1L1027.8 541.6L1015.2 541.6ZM1193.8 479.4L1209.0 471.1L1206.0 455.9L1201.0 452.9L1195.4 453.4L1182.4 472.0L1182.6 472.5ZM1247.6 455.5L1246.7 456.3L1250.9 477.6L1252.4 478.6L1266.2 472.5L1265.5 471.0L1265.3 455.5ZM1036.6 497.1L1040.3 500.9L1052.9 498.7L1054.8 477.6L1041.5 475.2L1040.6 475.2L1040.6 496.2L1036.7 496.2ZM1085.2 470.6L1085.2 475.2L1073.1 475.2L1071.0 476.4L1077.3 488.4L1090.1 486.1L1094.0 477.6ZM1092.9 487.5L1098.8 500.5L1112.9 490.4L1105.6 475.7L1097.1 478.4ZM1108.3 473.9L1108.2 474.0L1116.0 489.6L1123.6 492.8L1129.7 485.2L1127.3 471.6L1124.8 470.1ZM1132.7 484.2L1150.7 486.0L1151.1 485.6L1151.1 472.9L1145.3 467.7L1130.4 471.8ZM1177.5 500.5L1194.3 496.3L1192.3 482.1L1181.7 475.6L1173.0 488.1ZM1253.9 481.3L1255.9 493.4L1271.3 493.4L1274.2 491.7L1270.5 480.6L1267.7 475.2ZM1037.8 517.0L1047.8 526.6L1064.3 522.7L1058.7 503.9L1054.1 501.6L1041.0 503.9ZM1184.6 524.6L1193.7 524.1L1200.7 519.7L1199.6 502.2L1195.7 499.1L1177.6 503.7L1173.0 511.7L1181.7 523.1ZM1230.0 511.1L1230.4 504.5L1218.6 496.3L1202.7 502.4L1203.8 519.4L1206.7 520.5ZM1236.9 518.2L1244.8 522.1L1257.9 519.3L1251.3 499.5L1235.4 503.2L1233.5 504.5L1233.1 511.8ZM1069.1 542.1L1088.6 555.8L1088.7 555.8L1086.3 529.2L1080.2 524.4L1069.1 526.0ZM1216.7 533.6L1225.7 532.7L1234.0 519.4L1230.9 514.1L1209.2 522.8ZM1214.6 545.9L1222.9 555.2L1234.5 547.8L1225.9 535.8L1217.2 536.7ZM1237.5 546.7L1241.8 546.7L1243.0 545.7L1243.0 524.7L1236.4 521.4L1228.5 534.1ZM1246.1 525.0L1246.1 544.7L1258.7 543.8L1262.8 523.1L1259.8 522.1ZM1265.9 523.4L1261.7 544.6L1274.0 554.7L1274.0 524.1L1268.4 522.9ZM1032.4 558.0L1034.5 558.0L1034.5 560.7L1034.9 561.2L1050.6 554.1L1051.0 552.2L1043.8 541.5L1033.3 543.6ZM1044.0 578.4L1059.6 575.8L1060.8 570.5L1051.5 557.1L1036.1 564.1L1036.0 567.3ZM1133.7 555.0L1135.3 564.7L1138.0 567.6L1157.6 564.3L1158.5 561.3L1151.4 547.2L1138.4 547.2ZM1154.3 546.0L1160.8 558.9L1174.5 550.8L1174.6 550.7L1161.6 539.7L1160.3 539.6ZM1154.3 615.1L1157.0 629.8L1157.5 630.0L1174.7 622.4L1175.4 619.5L1165.5 607.4L1164.7 607.3ZM1025.1 639.7L1018.9 651.5L1034.1 658.5L1048.2 653.3L1046.9 635.7L1031.4 635.7ZM1073.7 634.5L1072.1 654.9L1080.9 661.6L1092.7 660.9L1094.1 660.1L1090.3 636.6ZM1174.3 647.3L1178.2 644.2L1180.7 642.9L1175.1 625.6L1160.3 632.1ZM822.5 542.6L823.1 542.4L866.7 549.2L878.0 540.5L854.1 522.6L823.1 541.6ZM823.5 545.6L823.4 545.6L823.8 546.0L831.5 561.4L835.2 578.1L843.4 589.0L857.1 601.7L865.6 604.6L865.6 552.2ZM1003.1 255.6L1003.1 273.4L1021.5 273.4L1021.5 255.1L1003.2 255.1L1003.2 255.6ZM1021.5 317.8L1021.5 298.5L1003.1 298.5L1003.1 317.8ZM1000.0 340.1L1000.0 320.9L982.5 320.9L982.5 340.1ZM1004.8 362.1L1004.8 343.2L987.3 343.2L987.3 362.1ZM984.2 386.5L984.2 365.2L964.4 365.2L964.4 386.5ZM920.1 389.6L901.0 389.6L901.0 408.5L920.1 408.5ZM1004.8 408.5L1004.8 389.6L987.3 389.6L987.3 408.5ZM1043.6 408.5L1043.6 389.6L1025.9 389.6L1025.9 408.5ZM961.3 430.0L961.3 411.6L943.8 411.6L943.8 430.0ZM1022.8 430.0L1022.8 411.6L1007.9 411.6L1007.9 430.0ZM1065.1 430.0L1065.1 411.6L1046.7 411.6L1046.7 430.0ZM1018.6 451.3L1018.6 433.1L1000.2 433.1L1000.2 451.3ZM1081.5 451.3L1081.5 433.1L1062.6 433.1L1062.6 451.3ZM1062.9 472.1L1063.5 472.1L1063.5 472.5L1068.7 474.1L1071.2 472.7L1071.2 472.1L1082.1 472.1L1082.1 466.1L1082.4 466.2L1082.3 462.2L1082.1 462.2L1082.1 454.4L1062.9 454.4Z" fill="#ee7856" stroke="#e95f3a" stroke-width="1" stroke-linejoin="miter"/>
<path d="M1046.7 386.5L1042.3 375.0L1027.8 375.8L1025.9 381.5L1025.9 386.5ZM1153.0 488.2L1152.3 498.5L1164.4 510.6L1170.2 510.3L1174.8 502.2L1170.1 489.3L1153.3 487.8ZM1270.0 496.5L1255.3 496.5L1254.1 498.0L1261.2 519.3L1264.7 520.5L1267.1 520.0ZM1273.2 495.9L1270.2 520.1L1275.6 521.3L1286.4 520.1L1281.6 508.6L1275.2 494.7ZM1277.1 524.2L1277.1 556.0L1279.1 556.6L1283.0 543.8L1286.9 531.8L1286.6 523.2ZM997.9 584.2L999.3 584.2L999.3 586.0L1020.9 586.0L1025.0 572.4L1025.4 572.5L1025.8 570.5L1028.4 570.5L1028.5 570.4L1028.6 569.7L1031.4 569.5L1031.4 567.7L1032.3 567.5L1032.9 567.0L1033.1 563.7L1032.3 562.9L1031.4 562.8L1031.4 561.0L1029.6 561.0L1029.5 560.7L1013.2 558.4L996.7 561.0L996.7 582.1ZM1023.2 588.6L1035.4 592.3L1041.5 580.2L1034.4 570.3L1034.4 572.4L1030.6 572.6L1030.4 572.8L1030.3 573.5L1028.2 573.5L1027.8 575.5L1027.3 575.4ZM1104.7 723.7L1108.9 729.6L1123.2 728.0L1123.2 727.8L1131.6 728.0L1129.2 718.6L1129.6 718.4L1129.9 715.6L1131.0 704.3L1130.9 704.3L1131.1 703.1L1122.3 701.3L1114.3 701.9L1114.2 701.6L1107.5 700.5L1110.1 716.1ZM984.2 362.1L984.2 343.2L964.4 343.2L964.4 362.1ZM1022.8 371.7L1022.8 365.2L1007.9 365.2L1007.9 386.5L1022.8 386.5L1022.8 379.9L1023.3 379.8L1025.0 374.5L1023.5 371.7ZM1022.8 408.5L1022.8 389.6L1007.9 389.6L1007.9 408.5ZM994.1 494.5L1012.9 493.6L1012.9 475.2L992.4 475.2L992.4 493.1L994.1 493.1Z" fill="#cb3c2e" stroke="#c02a1d" stroke-width="1" stroke-linejoin="miter"/>
<polyline points="757.0,488.0 759.8,490.1 761.9,492.9 764.4,495.3 767.2,497.5 769.6,500.1 772.2,502.5 775.5,504.1 778.2,506.4 780.3,509.4 782.1,512.2 785.2,513.9 787.5,516.3 788.8,519.7 791.8,521.4 793.6,524.3 796.3,526.3 799.0,528.1 801.5,530.2 804.7,531.4 806.8,534.0 809.3,536.2 812.3,537.6 815.0,539.4 817.2,542.2 819.8,544.6 822.5,546.9 824.7,549.5 825.1,553.1 826.9,556.0 828.8,558.7 830.0,561.9 831.6,565.1 830.9,568.8 832.3,572.0 832.7,575.5 833.8,578.8 835.4,582.0 837.7,584.6 839.5,587.7 842.2,590.0 844.7,592.0 846.5,594.8 849.3,596.5 851.1,599.3 853.5,601.4 856.3,603.1 860.3,603.7 864.0,605.0 867.5,606.9 870.6,608.4 872.7,611.3 876.0,612.4 878.8,614.4 881.5,616.5 884.6,617.9 887.2,620.0 890.0,621.9 893.7,620.8 897.5,620.0 898.8,616.9 900.6,614.1 902.1,611.1 904.2,608.3 905.0,605.0 906.8,601.8 908.7,598.6 910.1,595.1 911.8,591.8 912.5,588.1 916.4,586.0 920.0,583.4 922.9,581.6 926.5,581.5 929.4,579.7 932.6,581.1 936.0,581.5 939.5,581.5 942.9,582.3 946.3,582.5 950.1,582.2 953.8,583.5 957.5,583.3 961.3,583.4 964.6,585.3 968.0,587.2 970.6,590.0 973.0,592.8 975.7,595.4 979.5,596.5 981.9,599.4 983.8,602.5 986.7,604.9 989.4,607.4 991.3,610.6 993.1,613.4 993.9,616.8 995.2,619.9 998.0,622.2 998.8,625.6 1000.5,629.0 1003.3,631.8 1004.1,635.7 1006.3,638.8 1008.1,642.1 1008.7,646.0 1010.0,649.5 1012.3,652.6 1013.8,656.0 1015.9,658.8 1019.3,659.9 1022.2,661.7 1024.4,664.4 1026.0,667.6 1028.6,670.1 1030.0,673.4 1031.4,676.6 1033.0,679.8 1035.4,682.1 1038.5,683.6 1041.3,685.6 1043.3,688.4 1043.5,692.0 1045.3,695.2 1045.0,698.9 1046.7,702.2 1046.9,706.4 1048.6,710.2 1049.3,714.2 1051.3,717.3 1053.1,720.4 1054.8,723.6 1056.8,726.7 1058.8,729.7 1060.0,732.7 1061.2,735.8 1061.9,739.0 1063.9,741.7 1067.0,743.1 1070.2,744.3 1073.0,746.2 1076.5,746.8 1079.4,748.6 1083.0,749.6 1086.0,752.2 1089.7,752.8 1093.1,754.2 1096.6,755.5 1100.1,755.0 1103.5,756.0 1106.9,756.7 1110.4,756.0 1113.8,757.2 1116.9,758.3 1120.0,759.1 1123.5,759.0 1126.3,760.8 1129.6,761.4 1132.7,762.3" fill="none" stroke="#8a898e" stroke-width="1.15" stroke-linejoin="round"/>
<ellipse cx="619" cy="469.5" rx="2.4" ry="2.8" fill="#9ecae2"/>
<ellipse cx="1299" cy="575.5" rx="2.2" ry="3" fill="#9ecae2"/>
<ellipse cx="1321" cy="578.5" rx="2" ry="2.6" fill="#9ecae2"/>
<ellipse cx="1332" cy="585" rx="2.6" ry="2" fill="#9ecae2"/>
<ellipse cx="1352" cy="586.5" rx="7" ry="2.2" fill="#9ecae2"/>
<ellipse cx="1433" cy="558.2" rx="6.5" ry="3.2" fill="#9ecae2"/>
<ellipse cx="1414" cy="561" rx="3" ry="1.8" fill="#9ecae2"/>
<ellipse cx="1395" cy="604" rx="2.5" ry="2" fill="#9ecae2"/>
<ellipse cx="1414" cy="602" rx="2.5" ry="2.4" fill="#9ecae2"/>
<ellipse cx="1425" cy="604.5" rx="2" ry="2.6" fill="#9ecae2"/>
<ellipse cx="1443" cy="603" rx="8" ry="2.2" fill="#9ecae2"/>
<ellipse cx="1464" cy="611" rx="3.2" ry="4.5" fill="#9ecae2"/></svg>
<div style="position:absolute;left:594.50px;top:229.75px;width:1053.00px;height:548.25px;overflow:hidden;"><div class="t" style="left:149.20px;top:57.05px;font-size:17.9px;letter-spacing:0.051px;color:#3b3b43;text-shadow:0 0 1.6px #fff,0 0 1.6px #fff,0 0 1.6px #fff,1.1px 1.1px 1px rgba(255,255,255,.9),-1.1px -1.1px 1px rgba(255,255,255,.9),1.1px -1.1px 1px rgba(255,255,255,.9),-1.1px 1.1px 1px rgba(255,255,255,.9),0 1.5px 1px rgba(255,255,255,.8),0 -1.5px 1px rgba(255,255,255,.8),1.5px 0 1px rgba(255,255,255,.8),-1.5px 0 1px rgba(255,255,255,.8);-webkit-text-stroke:0.95px #3b3b43;">Santa Fe</div><div class="t" style="left:318.50px;top:81.05px;font-size:17.9px;letter-spacing:1.121px;color:#3b3b43;text-shadow:0 0 1.6px #fff,0 0 1.6px #fff,0 0 1.6px #fff,1.1px 1.1px 1px rgba(255,255,255,.9),-1.1px -1.1px 1px rgba(255,255,255,.9),1.1px -1.1px 1px rgba(255,255,255,.9),-1.1px 1.1px 1px rgba(255,255,255,.9),0 1.5px 1px rgba(255,255,255,.8),0 -1.5px 1px rgba(255,255,255,.8),1.5px 0 1px rgba(255,255,255,.8),-1.5px 0 1px rgba(255,255,255,.8);-webkit-text-stroke:0.95px #3b3b43;">Amarillo</div><div class="t" style="left:469.30px;top:67.05px;font-size:17.9px;letter-spacing:0.710px;color:#3b3b43;text-shadow:0 0 1.6px #fff,0 0 1.6px #fff,0 0 1.6px #fff,1.1px 1.1px 1px rgba(255,255,255,.9),-1.1px -1.1px 1px rgba(255,255,255,.9),1.1px -1.1px 1px rgba(255,255,255,.9),-1.1px 1.1px 1px rgba(255,255,255,.9),0 1.5px 1px rgba(255,255,255,.8),0 -1.5px 1px rgba(255,255,255,.8),1.5px 0 1px rgba(255,255,255,.8),-1.5px 0 1px rgba(255,255,255,.8);-webkit-text-stroke:0.95px #3b3b43;">Oklahoma City</div><div class="t" style="left:934.30px;top:33.05px;font-size:17.9px;letter-spacing:0.722px;color:#3b3b43;text-shadow:0 0 1.6px #fff,0 0 1.6px #fff,0 0 1.6px #fff,1.1px 1.1px 1px rgba(255,255,255,.9),-1.1px -1.1px 1px rgba(255,255,255,.9),1.1px -1.1px 1px rgba(255,255,255,.9),-1.1px 1.1px 1px rgba(255,255,255,.9),0 1.5px 1px rgba(255,255,255,.8),0 -1.5px 1px rgba(255,255,255,.8),1.5px 0 1px rgba(255,255,255,.8),-1.5px 0 1px rgba(255,255,255,.8);-webkit-text-stroke:0.95px #3b3b43;">Nashville</div><div class="t" style="left:800.30px;top:84.05px;font-size:17.9px;letter-spacing:0.981px;color:#3b3b43;text-shadow:0 0 1.6px #fff,0 0 1.6px #fff,0 0 1.6px #fff,1.1px 1.1px 1px rgba(255,255,255,.9),-1.1px -1.1px 1px rgba(255,255,255,.9),1.1px -1.1px 1px rgba(255,255,255,.9),-1.1px 1.1px 1px rgba(255,255,255,.9),0 1.5px 1px rgba(255,255,255,.8),0 -1.5px 1px rgba(255,255,255,.8),1.5px 0 1px rgba(255,255,255,.8),-1.5px 0 1px rgba(255,255,255,.8);-webkit-text-stroke:0.95px #3b3b43;">Memphis</div><div class="t" style="left:536.10px;top:202.05px;font-size:17.9px;letter-spacing:0.332px;color:#3b3b43;text-shadow:0 0 1.6px #fff,0 0 1.6px #fff,0 0 1.6px #fff,1.1px 1.1px 1px rgba(255,255,255,.9),-1.1px -1.1px 1px rgba(255,255,255,.9),1.1px -1.1px 1px rgba(255,255,255,.9),-1.1px 1.1px 1px rgba(255,255,255,.9),0 1.5px 1px rgba(255,255,255,.8),0 -1.5px 1px rgba(255,255,255,.8),1.5px 0 1px rgba(255,255,255,.8),-1.5px 0 1px rgba(255,255,255,.8);-webkit-text-stroke:0.95px #3b3b43;">Dallas</div><div class="t" style="left:639.50px;top:217.05px;font-size:17.9px;letter-spacing:0.749px;color:#3b3b43;text-shadow:0 0 1.6px #fff,0 0 1.6px #fff,0 0 1.6px #fff,1.1px 1.1px 1px rgba(255,255,255,.9),-1.1px -1.1px 1px rgba(255,255,255,.9),1.1px -1.1px 1px rgba(255,255,255,.9),-1.1px 1.1px 1px rgba(255,255,255,.9),0 1.5px 1px rgba(255,255,255,.8),0 -1.5px 1px rgba(255,255,255,.8),1.5px 0 1px rgba(255,255,255,.8),-1.5px 0 1px rgba(255,255,255,.8);-webkit-text-stroke:0.95px #3b3b43;">Shreveport</div><div class="t" style="left:800.80px;top:225.05px;font-size:17.9px;letter-spacing:-0.361px;color:#3b3b43;text-shadow:0 0 1.6px #fff,0 0 1.6px #fff,0 0 1.6px #fff,1.1px 1.1px 1px rgba(255,255,255,.9),-1.1px -1.1px 1px rgba(255,255,255,.9),1.1px -1.1px 1px rgba(255,255,255,.9),-1.1px 1.1px 1px rgba(255,255,255,.9),0 1.5px 1px rgba(255,255,255,.8),0 -1.5px 1px rgba(255,255,255,.8),1.5px 0 1px rgba(255,255,255,.8),-1.5px 0 1px rgba(255,255,255,.8);-webkit-text-stroke:0.95px #3b3b43;">Jackson</div><div class="t" style="left:135.80px;top:250.05px;font-size:17.9px;letter-spacing:-0.398px;color:#3b3b43;text-shadow:0 0 1.6px #fff,0 0 1.6px #fff,0 0 1.6px #fff,1.1px 1.1px 1px rgba(255,255,255,.9),-1.1px -1.1px 1px rgba(255,255,255,.9),1.1px -1.1px 1px rgba(255,255,255,.9),-1.1px 1.1px 1px rgba(255,255,255,.9),0 1.5px 1px rgba(255,255,255,.8),0 -1.5px 1px rgba(255,255,255,.8),1.5px 0 1px rgba(255,255,255,.8),-1.5px 0 1px rgba(255,255,255,.8);-webkit-text-stroke:0.95px #3b3b43;">El Paso</div><div class="t" style="left:495.10px;top:323.05px;font-size:17.9px;letter-spacing:0.990px;color:#3b3b43;text-shadow:0 0 1.6px #fff,0 0 1.6px #fff,0 0 1.6px #fff,1.1px 1.1px 1px rgba(255,255,255,.9),-1.1px -1.1px 1px rgba(255,255,255,.9),1.1px -1.1px 1px rgba(255,255,255,.9),-1.1px 1.1px 1px rgba(255,255,255,.9),0 1.5px 1px rgba(255,255,255,.8),0 -1.5px 1px rgba(255,255,255,.8),1.5px 0 1px rgba(255,255,255,.8),-1.5px 0 1px rgba(255,255,255,.8);-webkit-text-stroke:0.95px #3b3b43;">Austin</div><div class="t" style="left:584.60px;top:347.05px;font-size:17.9px;letter-spacing:0.805px;color:#3b3b43;text-shadow:0 0 1.6px #fff,0 0 1.6px #fff,0 0 1.6px #fff,1.1px 1.1px 1px rgba(255,255,255,.9),-1.1px -1.1px 1px rgba(255,255,255,.9),1.1px -1.1px 1px rgba(255,255,255,.9),-1.1px 1.1px 1px rgba(255,255,255,.9),0 1.5px 1px rgba(255,255,255,.8),0 -1.5px 1px rgba(255,255,255,.8),1.5px 0 1px rgba(255,255,255,.8),-1.5px 0 1px rgba(255,255,255,.8);-webkit-text-stroke:0.95px #3b3b43;">Houston</div><div class="t" style="left:440.20px;top:363.05px;font-size:17.9px;letter-spacing:0.655px;color:#3b3b43;text-shadow:0 0 1.6px #fff,0 0 1.6px #fff,0 0 1.6px #fff,1.1px 1.1px 1px rgba(255,255,255,.9),-1.1px -1.1px 1px rgba(255,255,255,.9),1.1px -1.1px 1px rgba(255,255,255,.9),-1.1px 1.1px 1px rgba(255,255,255,.9),0 1.5px 1px rgba(255,255,255,.8),0 -1.5px 1px rgba(255,255,255,.8),1.5px 0 1px rgba(255,255,255,.8),-1.5px 0 1px rgba(255,255,255,.8);-webkit-text-stroke:0.95px #3b3b43;">San Antonio</div><div class="t" style="left:783.00px;top:337.05px;font-size:17.9px;letter-spacing:0.724px;color:#3b3b43;text-shadow:0 0 1.6px #fff,0 0 1.6px #fff,0 0 1.6px #fff,1.1px 1.1px 1px rgba(255,255,255,.9),-1.1px -1.1px 1px rgba(255,255,255,.9),1.1px -1.1px 1px rgba(255,255,255,.9),-1.1px 1.1px 1px rgba(255,255,255,.9),0 1.5px 1px rgba(255,255,255,.8),0 -1.5px 1px rgba(255,255,255,.8),1.5px 0 1px rgba(255,255,255,.8),-1.5px 0 1px rgba(255,255,255,.8);-webkit-text-stroke:0.95px #3b3b43;">New Orleans</div><div class="t" style="left:133.30px;top:399.05px;font-size:17.9px;letter-spacing:0.726px;color:#3b3b43;text-shadow:0 0 1.6px #fff,0 0 1.6px #fff,0 0 1.6px #fff,1.1px 1.1px 1px rgba(255,255,255,.9),-1.1px -1.1px 1px rgba(255,255,255,.9),1.1px -1.1px 1px rgba(255,255,255,.9),-1.1px 1.1px 1px rgba(255,255,255,.9),0 1.5px 1px rgba(255,255,255,.8),0 -1.5px 1px rgba(255,255,255,.8),1.5px 0 1px rgba(255,255,255,.8),-1.5px 0 1px rgba(255,255,255,.8);-webkit-text-stroke:0.95px #3b3b43;">Chihuahua</div><div class="t" style="left:477.10px;top:441.05px;font-size:17.9px;letter-spacing:0.454px;color:#3b3b43;text-shadow:0 0 1.6px #fff,0 0 1.6px #fff,0 0 1.6px #fff,1.1px 1.1px 1px rgba(255,255,255,.9),-1.1px -1.1px 1px rgba(255,255,255,.9),1.1px -1.1px 1px rgba(255,255,255,.9),-1.1px 1.1px 1px rgba(255,255,255,.9),0 1.5px 1px rgba(255,255,255,.8),0 -1.5px 1px rgba(255,255,255,.8),1.5px 0 1px rgba(255,255,255,.8),-1.5px 0 1px rgba(255,255,255,.8);-webkit-text-stroke:0.95px #3b3b43;">Corpus Christi</div><div class="t" style="left:371.70px;top:537.05px;font-size:17.9px;letter-spacing:1.290px;color:#3b3b43;text-shadow:0 0 1.6px #fff,0 0 1.6px #fff,0 0 1.6px #fff,1.1px 1.1px 1px rgba(255,255,255,.9),-1.1px -1.1px 1px rgba(255,255,255,.9),1.1px -1.1px 1px rgba(255,255,255,.9),-1.1px 1.1px 1px rgba(255,255,255,.9),0 1.5px 1px rgba(255,255,255,.8),0 -1.5px 1px rgba(255,255,255,.8),1.5px 0 1px rgba(255,255,255,.8),-1.5px 0 1px rgba(255,255,255,.8);-webkit-text-stroke:0.95px #3b3b43;">Monterrey</div><div class="t" style="left:256.60px;top:543.05px;font-size:17.9px;letter-spacing:0.951px;color:#3b3b43;text-shadow:0 0 1.6px #fff,0 0 1.6px #fff,0 0 1.6px #fff,1.1px 1.1px 1px rgba(255,255,255,.9),-1.1px -1.1px 1px rgba(255,255,255,.9),1.1px -1.1px 1px rgba(255,255,255,.9),-1.1px 1.1px 1px rgba(255,255,255,.9),0 1.5px 1px rgba(255,255,255,.8),0 -1.5px 1px rgba(255,255,255,.8),1.5px 0 1px rgba(255,255,255,.8),-1.5px 0 1px rgba(255,255,255,.8);-webkit-text-stroke:0.95px #3b3b43;">Torreón</div><div class="t" style="left:483.90px;top:529.05px;font-size:17.9px;letter-spacing:0.446px;color:#3b3b43;text-shadow:0 0 1.6px #fff,0 0 1.6px #fff,0 0 1.6px #fff,1.1px 1.1px 1px rgba(255,255,255,.9),-1.1px -1.1px 1px rgba(255,255,255,.9),1.1px -1.1px 1px rgba(255,255,255,.9),-1.1px 1.1px 1px rgba(255,255,255,.9),0 1.5px 1px rgba(255,255,255,.8),0 -1.5px 1px rgba(255,255,255,.8),1.5px 0 1px rgba(255,255,255,.8),-1.5px 0 1px rgba(255,255,255,.8);-webkit-text-stroke:0.95px #3b3b43;">Matamoros</div><div class="t" style="left:1026.50px;top:314.05px;font-size:17.9px;letter-spacing:1.346px;color:#3b3b43;text-shadow:0 0 1.6px #fff,0 0 1.6px #fff,0 0 1.6px #fff,1.1px 1.1px 1px rgba(255,255,255,.9),-1.1px -1.1px 1px rgba(255,255,255,.9),1.1px -1.1px 1px rgba(255,255,255,.9),-1.1px 1.1px 1px rgba(255,255,255,.9),0 1.5px 1px rgba(255,255,255,.8),0 -1.5px 1px rgba(255,255,255,.8),1.5px 0 1px rgba(255,255,255,.8),-1.5px 0 1px rgba(255,255,255,.8);-webkit-text-stroke:0.95px #3b3b43;">Tallahassee</div><div class="t" style="left:1039.50px;top:154.05px;font-size:17.9px;letter-spacing:1.212px;color:#3b3b43;text-shadow:0 0 1.6px #fff,0 0 1.6px #fff,0 0 1.6px #fff,1.1px 1.1px 1px rgba(255,255,255,.9),-1.1px -1.1px 1px rgba(255,255,255,.9),1.1px -1.1px 1px rgba(255,255,255,.9),-1.1px 1.1px 1px rgba(255,255,255,.9),0 1.5px 1px rgba(255,255,255,.8),0 -1.5px 1px rgba(255,255,255,.8),1.5px 0 1px rgba(255,255,255,.8),-1.5px 0 1px rgba(255,255,255,.8);-webkit-text-stroke:0.95px #3b3b43;">Atlanta</div><div class="t" style="left:-70.50px;top:379.05px;font-size:17.9px;letter-spacing:1.217px;color:#3b3b43;text-shadow:0 0 1.6px #fff,0 0 1.6px #fff,0 0 1.6px #fff,1.1px 1.1px 1px rgba(255,255,255,.9),-1.1px -1.1px 1px rgba(255,255,255,.9),1.1px -1.1px 1px rgba(255,255,255,.9),-1.1px 1.1px 1px rgba(255,255,255,.9),0 1.5px 1px rgba(255,255,255,.8),0 -1.5px 1px rgba(255,255,255,.8),1.5px 0 1px rgba(255,255,255,.8),-1.5px 0 1px rgba(255,255,255,.8);-webkit-text-stroke:0.95px #3b3b43;">Hermosillo</div></div>
<div style="position:absolute;left:608.00px;top:242.30px;width:29.00px;height:29.00px;background:#fff;border-radius:5px;box-shadow:0 0 0 1.8px rgba(0,0,0,.2);"></div>
<svg style="position:absolute;left:612.50px;top:247.00px;" width="20" height="20" viewBox="0 0 20 20"><circle cx="8" cy="8" r="5.3" fill="none" stroke="#111" stroke-width="2.4"/><path d="M12.2 12.2L16.9 16.9" stroke="#111" stroke-width="3.2" stroke-linecap="butt"/></svg>
<div style="position:absolute;left:607.50px;top:641.50px;width:29.50px;height:29.50px;background:#fff;border-radius:5px;box-shadow:0 0 0 1.8px rgba(0,0,0,.2);"></div>
<svg style="position:absolute;left:610.00px;top:644.00px;" width="25" height="25" viewBox="0 0 25 25"><circle cx="12.2" cy="12.2" r="7.6" fill="none" stroke="#d9d9dc" stroke-width="1.6"/><path d="M12.2 2.5V5M12.2 19.5V22M2.5 12.2H5M19.5 12.2H22" stroke="#d9d9dc" stroke-width="1.5"/><path d="M4 20.2L20.6 4" stroke="#f5a3a3" stroke-width="1.7"/></svg>
<div style="position:absolute;left:607.50px;top:682.50px;width:29.50px;height:83.00px;background:#fff;border-radius:5px;box-shadow:0 0 0 1.8px rgba(0,0,0,.2);"></div>
<div style="position:absolute;left:607.50px;top:710.60px;width:29.50px;height:1.20px;background:#dddde0;"></div>
<div style="position:absolute;left:607.50px;top:738.00px;width:29.50px;height:1.20px;background:#dddde0;"></div>
<svg style="position:absolute;left:612.00px;top:687.00px;" width="20" height="20" viewBox="0 0 20 20"><path d="M10 3.6V16.4M3.6 10H16.4" stroke="#111" stroke-width="3.1" stroke-linecap="round"/></svg>
<svg style="position:absolute;left:612.00px;top:715.00px;" width="20" height="20" viewBox="0 0 20 20"><path d="M3.6 9.8H16.4" stroke="#111" stroke-width="3.1" stroke-linecap="round"/></svg>
<svg style="position:absolute;left:612.00px;top:740.00px;" width="20" height="24" viewBox="0 0 20 24"><path d="M10 2L14.6 10.6H5.4Z" fill="#222"/><path d="M10 22.6L14.2 14.2H5.8Z" fill="#c8c8cb"/></svg>
<div style="position:absolute;left:1138.50px;top:751.30px;width:378.50px;height:26.70px;background:rgba(255,255,255,.55);"></div>
<div class="t" style="left:1143.00px;top:755.90px;font-size:16.2px;letter-spacing:0.388px;color:#26262c;">© Mapbox © OpenStreetMap</div>
<div class="t" style="left:1370.00px;top:755.90px;font-size:16.2px;font-weight:700;letter-spacing:0.351px;color:#1c1c22;">Improve this map</div>
<div style="position:absolute;left:608.50px;top:788.00px;width:92.00px;height:32.50px;background:#fff;border:1.5px solid #111;box-sizing:border-box;border-radius:5px;"></div>
<div style="position:absolute;left:608.50px;top:788.00px;width:47.20px;height:32.50px;background:#000;border-radius:5px 0 0 5px;"></div>
<svg style="position:absolute;left:620.00px;top:794.00px;" width="20" height="20" viewBox="0 0 20 20"><path d="M9.9 3.2A4.4 4.4 0 0 1 14.3 7.6C14.3 10.4 11.4 13.2 9.9 16.2C8.4 13.2 5.5 10.4 5.5 7.6A4.4 4.4 0 0 1 9.9 3.2Z" fill="#fff"/><circle cx="9.9" cy="7.5" r="1.9" fill="#000"/><path d="M6.2 11.8L2.6 13.6L9.9 17.6L17.2 13.6L13.6 11.8" fill="none" stroke="#fff" stroke-width="1.6" stroke-linejoin="round"/></svg>
<svg style="position:absolute;left:667.00px;top:795.50px;" width="18" height="20" viewBox="0 0 18 20"><rect x="0.2" y="0.2" width="16.4" height="18.6" fill="#111"/><rect x="1.7" y="4.8" width="3.5" height="2.9" fill="#fff"/><rect x="6.7" y="4.8" width="3.5" height="2.9" fill="#fff"/><rect x="11.7" y="4.8" width="3.5" height="2.9" fill="#fff"/><rect x="1.7" y="9.4" width="3.5" height="2.9" fill="#fff"/><rect x="6.7" y="9.4" width="3.5" height="2.9" fill="#fff"/><rect x="11.7" y="9.4" width="3.5" height="2.9" fill="#fff"/><rect x="1.7" y="14.0" width="3.5" height="2.9" fill="#fff"/><rect x="6.7" y="14.0" width="3.5" height="2.9" fill="#fff"/><rect x="11.7" y="14.0" width="3.5" height="2.9" fill="#fff"/></svg>
<div style="position:absolute;left:1497.00px;top:787.00px;width:136.50px;height:33.30px;background:#fff;border:1.3px solid #5c5c5f;box-sizing:border-box;border-radius:6px;"></div>
<div class="t" style="left:1520.00px;top:794.20px;font-size:17.6px;letter-spacing:0.254px;color:#111;">Legend</div>
<svg style="position:absolute;left:1598.00px;top:800.30px;" width="15" height="9.900000000000091" viewBox="0 0 15 9.900000000000091"><polyline points="2,7.900000000000091 7.5,2 13,7.900000000000091" fill="none" stroke="#111" stroke-width="2.0"/></svg>
<div class="t" style="left:595.40px;top:877.00px;font-size:19px;letter-spacing:0.166px;color:#1c1c1c;">Preview of</div>
<div class="t" style="left:690.60px;top:877.00px;font-size:19px;letter-spacing:-0.007px;color:#0b4a8e;text-decoration:underline;text-decoration-thickness:1.4px;text-underline-offset:2.5px;">PLACES: Local Data for Better Health, County Data 2024 release</div>
<div style="position:absolute;left:592.0px;top:918.5px;width:1059.5px;height:158.5px;overflow:hidden;">
<div style="position:absolute;left:2.20px;top:3.00px;width:1053.30px;height:200.00px;background:#fff;border:1.5px solid #d6d5d9;box-sizing:border-box;border-radius:4px;box-shadow:0 0 4px rgba(0,0,0,.12);"></div>
<div style="position:absolute;left:3.70px;top:5.00px;width:1050.30px;height:56.00px;background:#f6f5f8;"></div>
<div style="position:absolute;left:3.70px;top:60.50px;width:1050.30px;height:2.00px;background:#cbcace;"></div>
<div style="position:absolute;left:3.70px;top:103.10px;width:1050.30px;height:1.30px;background:#dad9dd;"></div>
<div style="position:absolute;left:3.70px;top:145.10px;width:1050.30px;height:1.30px;background:#dad9dd;"></div>
<div style="position:absolute;left:111.95px;top:8.00px;width:1.70px;height:53.00px;background:#cccbcf;"></div>
<div style="position:absolute;left:112.15px;top:62.00px;width:1.30px;height:200.00px;background:#dad9dd;"></div>
<div style="position:absolute;left:220.70px;top:8.00px;width:1.70px;height:53.00px;background:#cccbcf;"></div>
<div style="position:absolute;left:220.90px;top:62.00px;width:1.30px;height:200.00px;background:#dad9dd;"></div>
<div style="position:absolute;left:329.45px;top:8.00px;width:1.70px;height:53.00px;background:#cccbcf;"></div>
<div style="position:absolute;left:329.65px;top:62.00px;width:1.30px;height:200.00px;background:#dad9dd;"></div>
<div style="position:absolute;left:438.20px;top:8.00px;width:1.70px;height:53.00px;background:#cccbcf;"></div>
<div style="position:absolute;left:438.40px;top:62.00px;width:1.30px;height:200.00px;background:#dad9dd;"></div>
<div style="position:absolute;left:546.95px;top:8.00px;width:1.70px;height:53.00px;background:#cccbcf;"></div>
<div style="position:absolute;left:547.15px;top:62.00px;width:1.30px;height:200.00px;background:#dad9dd;"></div>
<div style="position:absolute;left:655.70px;top:8.00px;width:1.70px;height:53.00px;background:#cccbcf;"></div>
<div style="position:absolute;left:655.90px;top:62.00px;width:1.30px;height:200.00px;background:#dad9dd;"></div>
<div style="position:absolute;left:764.45px;top:8.00px;width:1.70px;height:53.00px;background:#cccbcf;"></div>
<div style="position:absolute;left:764.65px;top:62.00px;width:1.30px;height:200.00px;background:#dad9dd;"></div>
<div style="position:absolute;left:873.20px;top:8.00px;width:1.70px;height:53.00px;background:#cccbcf;"></div>
<div style="position:absolute;left:873.40px;top:62.00px;width:1.30px;height:200.00px;background:#dad9dd;"></div>
<div style="position:absolute;left:981.95px;top:8.00px;width:1.70px;height:53.00px;background:#cccbcf;"></div>
<div style="position:absolute;left:982.15px;top:62.00px;width:1.30px;height:200.00px;background:#dad9dd;"></div>
</div>
<div class="t" style="left:610.20px;top:944.70px;font-size:15.6px;font-weight:700;letter-spacing:0.444px;color:#3a3a3d;">Year</div>
<div style="position:absolute;left:682.75px;top:944.75px;width:3.10px;height:3.10px;border-radius:50%;background:#2a2a2a;"></div><div style="position:absolute;left:682.75px;top:950.35px;width:3.10px;height:3.10px;border-radius:50%;background:#2a2a2a;"></div><div style="position:absolute;left:682.75px;top:955.95px;width:3.10px;height:3.10px;border-radius:50%;background:#2a2a2a;"></div>
<div class="t" style="left:718.95px;top:944.70px;font-size:15.6px;font-weight:700;letter-spacing:-0.170px;color:#3a3a3d;">State<span style="font-weight:400">…</span></div>
<div style="position:absolute;left:791.50px;top:944.75px;width:3.10px;height:3.10px;border-radius:50%;background:#2a2a2a;"></div><div style="position:absolute;left:791.50px;top:950.35px;width:3.10px;height:3.10px;border-radius:50%;background:#2a2a2a;"></div><div style="position:absolute;left:791.50px;top:955.95px;width:3.10px;height:3.10px;border-radius:50%;background:#2a2a2a;"></div>
<div class="t" style="left:827.70px;top:944.70px;font-size:15.6px;font-weight:700;letter-spacing:-0.170px;color:#3a3a3d;">State<span style="font-weight:400">…</span></div>
<div style="position:absolute;left:900.25px;top:944.75px;width:3.10px;height:3.10px;border-radius:50%;background:#2a2a2a;"></div><div style="position:absolute;left:900.25px;top:950.35px;width:3.10px;height:3.10px;border-radius:50%;background:#2a2a2a;"></div><div style="position:absolute;left:900.25px;top:955.95px;width:3.10px;height:3.10px;border-radius:50%;background:#2a2a2a;"></div>
<div class="t" style="left:936.45px;top:944.70px;font-size:15.6px;font-weight:700;letter-spacing:-0.521px;color:#3a3a3d;">Locat<span style="font-weight:400">…</span></div>
<div style="position:absolute;left:1009.00px;top:944.75px;width:3.10px;height:3.10px;border-radius:50%;background:#2a2a2a;"></div><div style="position:absolute;left:1009.00px;top:950.35px;width:3.10px;height:3.10px;border-radius:50%;background:#2a2a2a;"></div><div style="position:absolute;left:1009.00px;top:955.95px;width:3.10px;height:3.10px;border-radius:50%;background:#2a2a2a;"></div>
<div class="t" style="left:1045.20px;top:944.70px;font-size:15.6px;font-weight:700;letter-spacing:-0.379px;color:#3a3a3d;">Data<span style="font-weight:400">…</span></div>
<div style="position:absolute;left:1117.75px;top:944.75px;width:3.10px;height:3.10px;border-radius:50%;background:#2a2a2a;"></div><div style="position:absolute;left:1117.75px;top:950.35px;width:3.10px;height:3.10px;border-radius:50%;background:#2a2a2a;"></div><div style="position:absolute;left:1117.75px;top:955.95px;width:3.10px;height:3.10px;border-radius:50%;background:#2a2a2a;"></div>
<div class="t" style="left:1153.95px;top:944.70px;font-size:15.6px;font-weight:700;letter-spacing:-0.529px;color:#3a3a3d;">Categ<span style="font-weight:400">…</span></div>
<div style="position:absolute;left:1226.50px;top:944.75px;width:3.10px;height:3.10px;border-radius:50%;background:#2a2a2a;"></div><div style="position:absolute;left:1226.50px;top:950.35px;width:3.10px;height:3.10px;border-radius:50%;background:#2a2a2a;"></div><div style="position:absolute;left:1226.50px;top:955.95px;width:3.10px;height:3.10px;border-radius:50%;background:#2a2a2a;"></div>
<div class="t" style="left:1262.70px;top:944.70px;font-size:15.6px;font-weight:700;letter-spacing:-0.156px;color:#3a3a3d;">Meas<span style="font-weight:400">…</span></div>
<div style="position:absolute;left:1335.25px;top:944.75px;width:3.10px;height:3.10px;border-radius:50%;background:#2a2a2a;"></div><div style="position:absolute;left:1335.25px;top:950.35px;width:3.10px;height:3.10px;border-radius:50%;background:#2a2a2a;"></div><div style="position:absolute;left:1335.25px;top:955.95px;width:3.10px;height:3.10px;border-radius:50%;background:#2a2a2a;"></div>
<div class="t" style="left:1371.45px;top:944.70px;font-size:15.6px;font-weight:700;letter-spacing:-0.718px;color:#3a3a3d;">Data_<span style="font-weight:400">…</span></div>
<div style="position:absolute;left:1444.00px;top:944.75px;width:3.10px;height:3.10px;border-radius:50%;background:#2a2a2a;"></div><div style="position:absolute;left:1444.00px;top:950.35px;width:3.10px;height:3.10px;border-radius:50%;background:#2a2a2a;"></div><div style="position:absolute;left:1444.00px;top:955.95px;width:3.10px;height:3.10px;border-radius:50%;background:#2a2a2a;"></div>
<div class="t" style="left:1480.20px;top:944.70px;font-size:15.6px;font-weight:700;letter-spacing:-0.818px;color:#3a3a3d;">Data_<span style="font-weight:400">…</span></div>
<div style="position:absolute;left:1552.75px;top:944.75px;width:3.10px;height:3.10px;border-radius:50%;background:#2a2a2a;"></div><div style="position:absolute;left:1552.75px;top:950.35px;width:3.10px;height:3.10px;border-radius:50%;background:#2a2a2a;"></div><div style="position:absolute;left:1552.75px;top:955.95px;width:3.10px;height:3.10px;border-radius:50%;background:#2a2a2a;"></div>
<div class="t" style="left:1588.95px;top:944.70px;font-size:15.6px;font-weight:700;letter-spacing:-0.818px;color:#3a3a3d;">Data_<span style="font-weight:400">…</span></div>
<div class="t" style="left:607.10px;top:993.70px;font-size:15.6px;letter-spacing:1.098px;color:#444447;">2022</div>
<div class="t" style="left:715.85px;top:993.70px;font-size:15.6px;letter-spacing:-0.235px;color:#444447;">TX</div>
<div class="t" style="left:824.60px;top:993.70px;font-size:15.6px;letter-spacing:1.087px;color:#444447;">Texas</div>
<div class="t" style="left:933.35px;top:993.70px;font-size:15.6px;letter-spacing:1.031px;color:#444447;">Anderson</div>
<div class="t" style="left:1042.10px;top:993.70px;font-size:15.6px;letter-spacing:-0.328px;color:#444447;">BRFSS</div>
<div class="t" style="left:1150.85px;top:993.70px;font-size:15.6px;letter-spacing:0.173px;color:#444447;">Health Ou…</div>
<div class="t" style="left:1259.60px;top:993.70px;font-size:15.6px;letter-spacing:0.248px;color:#444447;">Chronic o…</div>
<div class="t" style="left:1368.35px;top:993.70px;font-size:15.6px;color:#444447;">%</div>
<div class="t" style="left:1477.10px;top:993.70px;font-size:15.6px;letter-spacing:0.025px;color:#444447;">Crude pre…</div>
<div class="t" style="left:607.10px;top:1034.70px;font-size:15.6px;letter-spacing:1.098px;color:#444447;">2022</div>
<div class="t" style="left:715.85px;top:1034.70px;font-size:15.6px;letter-spacing:-0.235px;color:#444447;">TX</div>
<div class="t" style="left:824.60px;top:1034.70px;font-size:15.6px;letter-spacing:1.087px;color:#444447;">Texas</div>
<div class="t" style="left:933.35px;top:1034.70px;font-size:15.6px;letter-spacing:1.001px;color:#444447;">Andrews</div>
<div class="t" style="left:1042.10px;top:1034.70px;font-size:15.6px;letter-spacing:-0.328px;color:#444447;">BRFSS</div>
<div class="t" style="left:1150.85px;top:1034.70px;font-size:15.6px;letter-spacing:0.173px;color:#444447;">Health Ou…</div>
<div class="t" style="left:1259.60px;top:1034.70px;font-size:15.6px;letter-spacing:0.248px;color:#444447;">Chronic o…</div>
<div class="t" style="left:1368.35px;top:1034.70px;font-size:15.6px;color:#444447;">%</div>
<div class="t" style="left:1477.10px;top:1034.70px;font-size:15.6px;letter-spacing:0.025px;color:#444447;">Crude pre…</div>
<div style="position:absolute;left:1674.60px;top:83.00px;width:1.20px;height:995.00px;background:#e4e3e7;"></div>
<div style="position:absolute;left:1675.80px;top:83.00px;width:8.00px;height:995.00px;background:#fcfbfd;"></div>
<div style="position:absolute;left:1683.00px;top:83.00px;width:347.00px;height:995.00px;background:#f8f7f9;"></div>
<div style="position:absolute;left:1682.80px;top:83.00px;width:1.50px;height:995.00px;background:#a9a8ac;"></div>
<div style="position:absolute;left:2029.00px;top:83.00px;width:1.50px;height:995.00px;background:#cfced2;"></div>
<div style="position:absolute;left:2030.50px;top:83.00px;width:17.50px;height:995.00px;background:#f1f0f3;"></div>
<div style="position:absolute;left:2034.50px;top:86.00px;width:16.00px;height:560.00px;background:#b9b8bc;border-radius:8px;"></div>
<svg style="position:absolute;left:1705.00px;top:101.00px;" width="20" height="20" viewBox="0 0 20 20"><path d="M0.6 1.2H18.6L11.6 9.6V18.6H7.6V9.6Z" fill="#404043"/></svg>
<div class="t" style="left:1730.00px;top:100.00px;font-size:20px;letter-spacing:0.105px;color:#1d1d2c;">Filters (3)</div>
<svg style="position:absolute;left:1987.00px;top:99.50px;" width="23" height="23" viewBox="0 0 23 23"><path d="M2.4 2.4L20.4 20.2M20.4 2.4L2.4 20.2" stroke="#111" stroke-width="1.7" fill="none"/></svg>
<div style="position:absolute;left:1711.00px;top:134.50px;width:121.00px;height:42.00px;background:#fff;border:2px solid #1b78ab;box-sizing:border-box;border-radius:2px;"></div>
<div class="t" style="left:1737.00px;top:147.20px;font-size:16.6px;letter-spacing:-0.227px;color:#0b3f86;">Add Filter</div>
<div class="t" style="left:1926.00px;top:144.90px;font-size:16.2px;letter-spacing:-0.166px;color:#2438ad;">Clear All</div>
<div class="t" style="left:1711.25px;top:194.90px;font-size:15.2px;letter-spacing:-0.231px;color:#1d1d2c;">StateAbbr</div>
<div style="position:absolute;left:1711.00px;top:216.30px;width:291.00px;height:42.50px;background:#fff;border:1px solid #bdbcc0;box-sizing:border-box;border-radius:3px;"></div>
<div style="position:absolute;left:1969.00px;top:216.30px;width:1.20px;height:42.50px;background:#bdbcc0;"></div>
<div class="t" style="left:1726.60px;top:226.90px;font-size:16.2px;letter-spacing:-1.302px;color:#1d1d2c;">TX</div>
<svg style="position:absolute;left:1940.00px;top:231.90px;" width="22" height="13.0" viewBox="0 0 22 13.0"><polyline points="2,2 11.0,11.0 20,2" fill="none" stroke="#1a1a1a" stroke-width="1.9"/></svg>
<div style="position:absolute;left:1983.85px;top:229.25px;width:3.10px;height:3.10px;border-radius:50%;background:#1a1a1a;"></div><div style="position:absolute;left:1983.85px;top:235.15px;width:3.10px;height:3.10px;border-radius:50%;background:#1a1a1a;"></div><div style="position:absolute;left:1983.85px;top:240.95px;width:3.10px;height:3.10px;border-radius:50%;background:#1a1a1a;"></div>
<div class="t" style="left:1711.25px;top:270.90px;font-size:15.2px;letter-spacing:-0.233px;color:#1d1d2c;">MeasureId</div>
<div style="position:absolute;left:1711.00px;top:292.40px;width:291.00px;height:42.50px;background:#fff;border:1px solid #bdbcc0;box-sizing:border-box;border-radius:3px;"></div>
<div style="position:absolute;left:1969.00px;top:292.40px;width:1.20px;height:42.50px;background:#bdbcc0;"></div>
<div class="t" style="left:1726.60px;top:303.90px;font-size:16.2px;letter-spacing:-1.568px;color:#1d1d2c;">COPD</div>
<svg style="position:absolute;left:1940.00px;top:308.00px;" width="22" height="13.0" viewBox="0 0 22 13.0"><polyline points="2,2 11.0,11.0 20,2" fill="none" stroke="#1a1a1a" stroke-width="1.9"/></svg>
<div style="position:absolute;left:1983.85px;top:305.35px;width:3.10px;height:3.10px;border-radius:50%;background:#1a1a1a;"></div><div style="position:absolute;left:1983.85px;top:311.25px;width:3.10px;height:3.10px;border-radius:50%;background:#1a1a1a;"></div><div style="position:absolute;left:1983.85px;top:317.05px;width:3.10px;height:3.10px;border-radius:50%;background:#1a1a1a;"></div>
<div class="t" style="left:1711.25px;top:346.90px;font-size:15.2px;letter-spacing:-0.469px;color:#1d1d2c;">Data_Value_Type</div>
<div style="position:absolute;left:1711.00px;top:368.40px;width:291.00px;height:42.50px;background:#fff;border:1px solid #bdbcc0;box-sizing:border-box;border-radius:3px;"></div>
<div style="position:absolute;left:1969.00px;top:368.40px;width:1.20px;height:42.50px;background:#bdbcc0;"></div>
<div class="t" style="left:1726.60px;top:380.90px;font-size:16.2px;letter-spacing:-0.205px;color:#1d1d2c;">Crude prevalence</div>
<svg style="position:absolute;left:1940.00px;top:384.00px;" width="22" height="13.0" viewBox="0 0 22 13.0"><polyline points="2,2 11.0,11.0 20,2" fill="none" stroke="#1a1a1a" stroke-width="1.9"/></svg>
<div style="position:absolute;left:1983.85px;top:381.35px;width:3.10px;height:3.10px;border-radius:50%;background:#1a1a1a;"></div><div style="position:absolute;left:1983.85px;top:387.25px;width:3.10px;height:3.10px;border-radius:50%;background:#1a1a1a;"></div><div style="position:absolute;left:1983.85px;top:393.05px;width:3.10px;height:3.10px;border-radius:50%;background:#1a1a1a;"></div>
<div style="position:absolute;left:0.00px;top:1077.00px;width:2048.00px;height:75.00px;background:linear-gradient(#f8f7f9 0,#f8f7f9 78%,#f1f0f2 100%);"></div>
<div style="position:absolute;left:0.00px;top:1077.00px;width:2048.00px;height:1.60px;background:#c6c5c9;"></div>
<svg style="position:absolute;left:5.00px;top:1100.00px;" width="20" height="19" viewBox="0 0 20 19"><path d="M5.2 6.2A6.6 6.6 0 1 1 9.5 16.3" fill="none" stroke="#1b2a4a" stroke-width="1.7"/><path d="M2.6 3.2L3.6 8.2L8.6 7.3" fill="none" stroke="#1b2a4a" stroke-width="1.7"/></svg>
<div class="t" style="left:34.50px;top:1102.90px;font-size:18.2px;letter-spacing:-0.136px;color:#0b4a8e;">Reset</div>
<div style="position:absolute;left:1876.00px;top:1086.00px;width:161.00px;height:50.50px;background:#fff;border:1px solid #b6b5b9;box-sizing:border-box;border-radius:2px;"></div>
<div class="t" style="left:1894.50px;top:1103.35px;font-size:17.3px;letter-spacing:0.098px;color:#14143c;">Back to Dataset</div>
</div></body></html>
